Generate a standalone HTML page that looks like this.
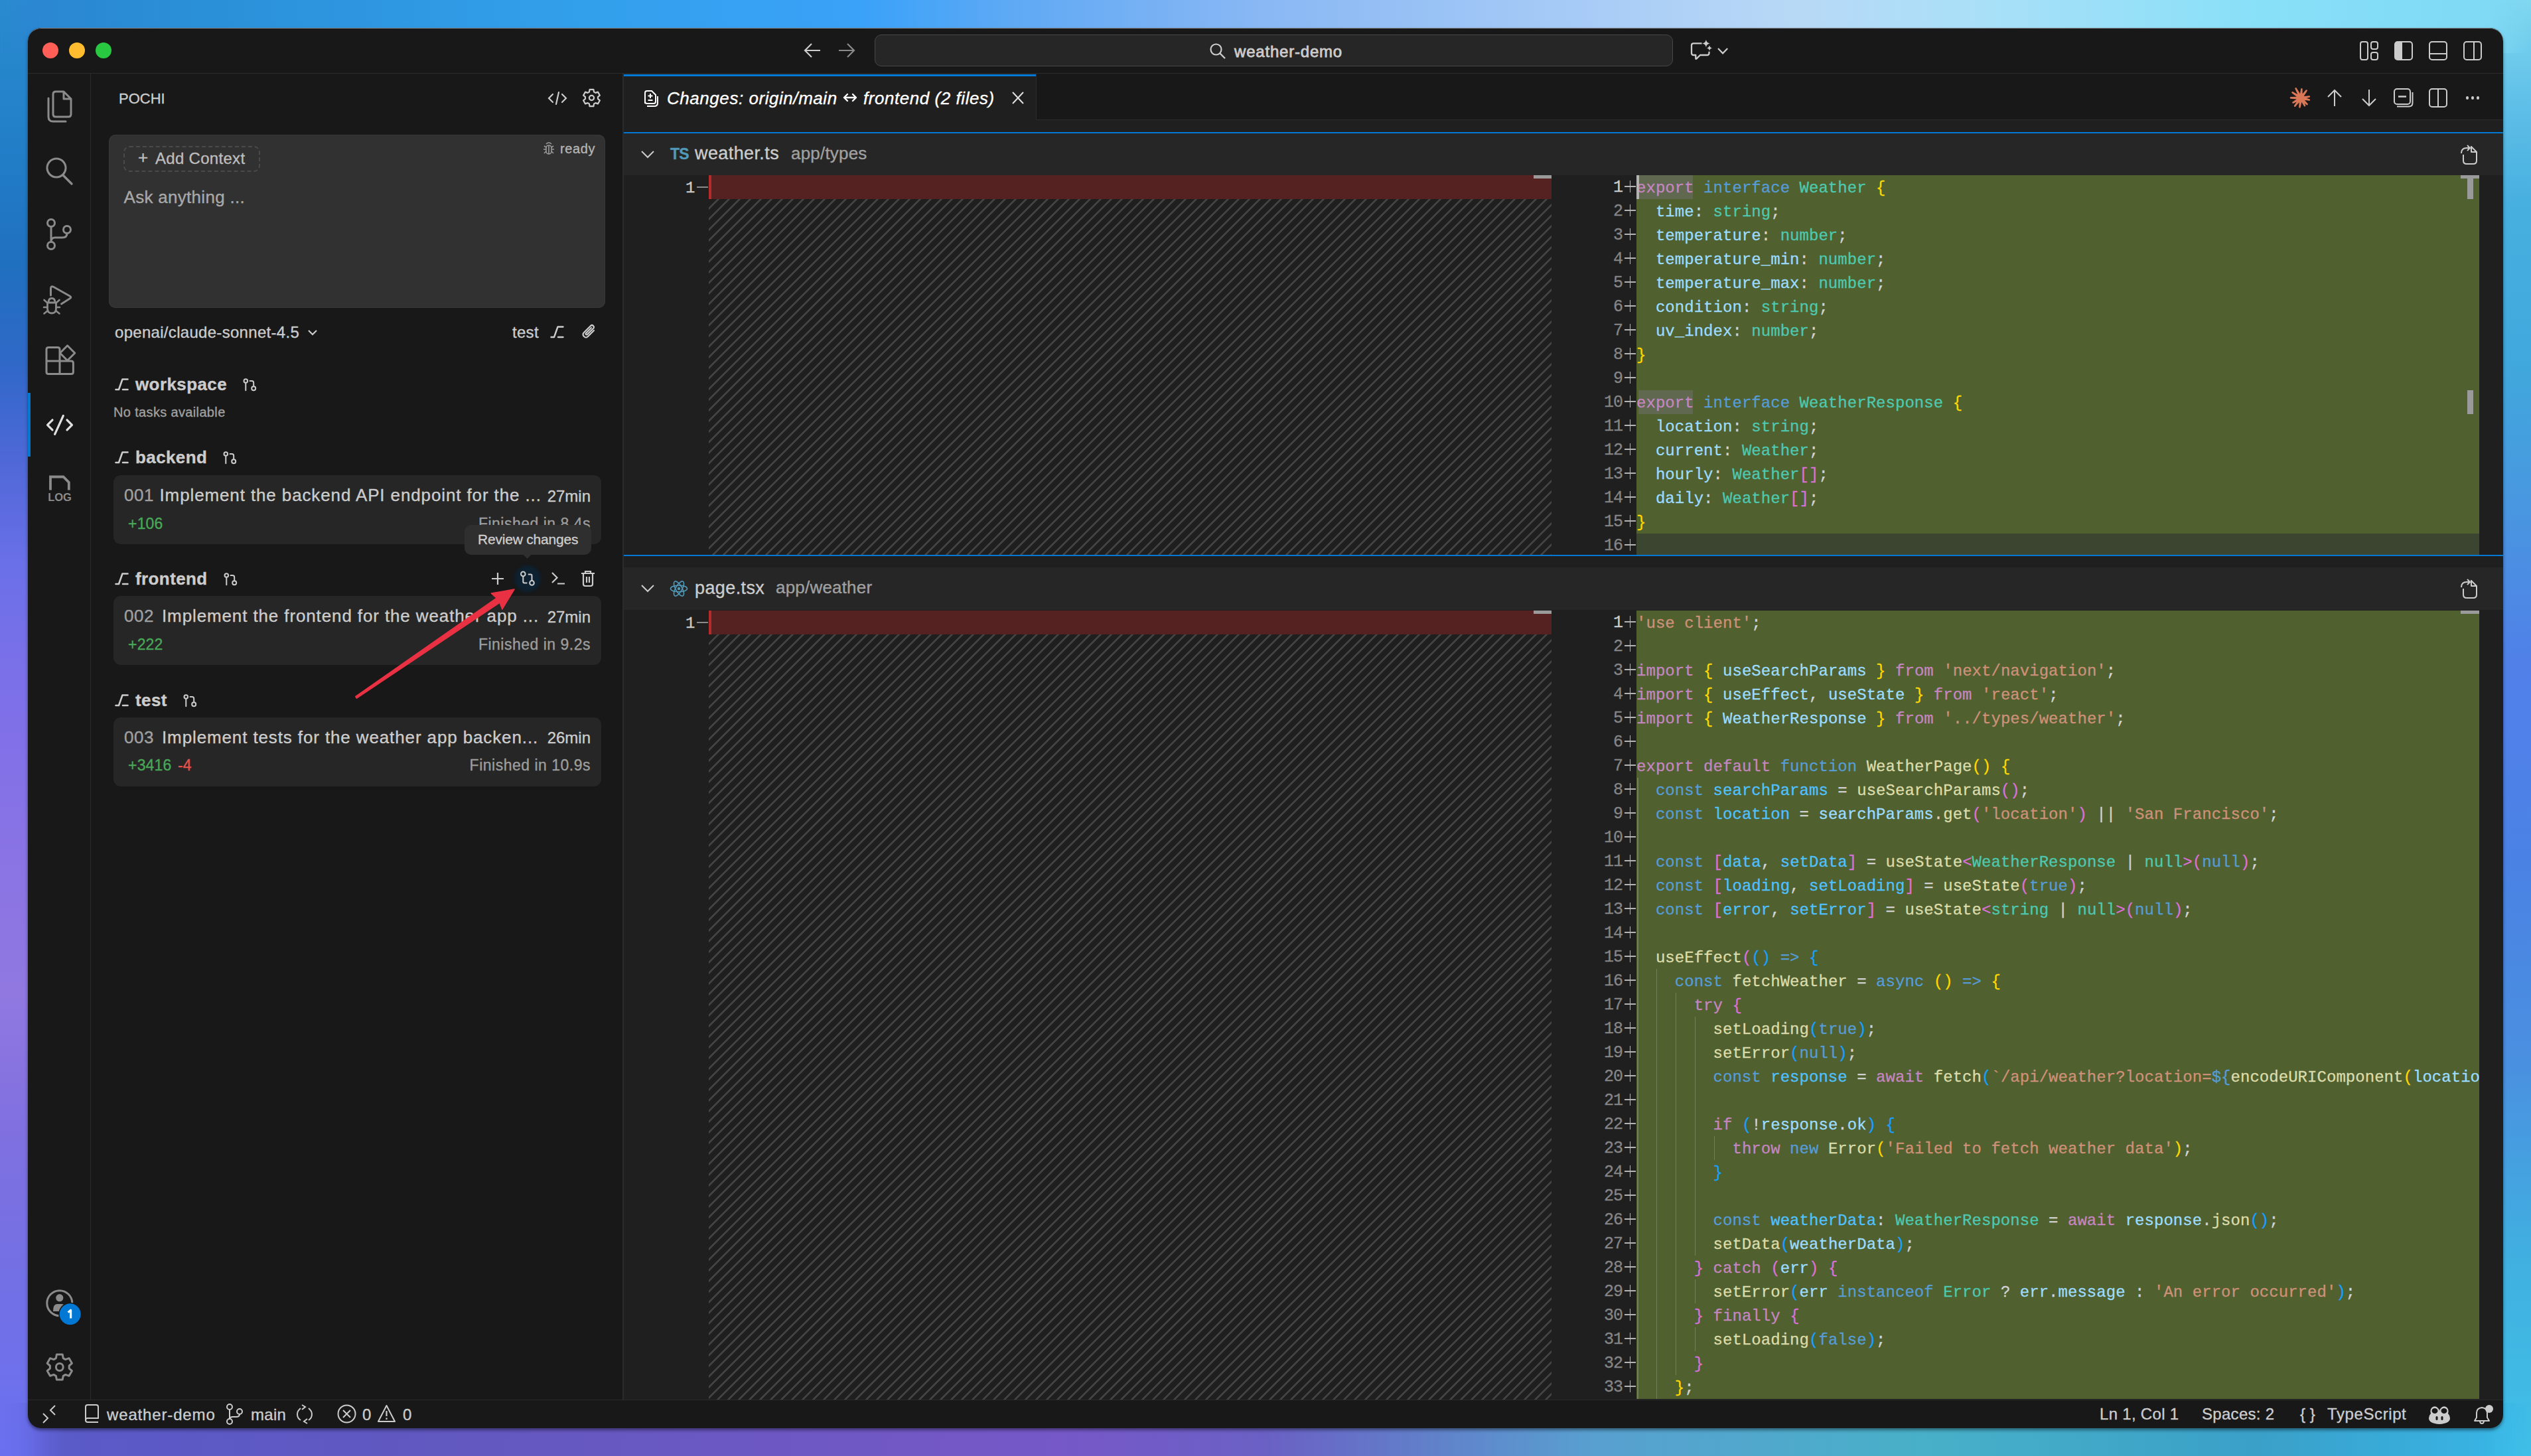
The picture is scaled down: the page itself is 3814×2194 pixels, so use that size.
<!DOCTYPE html><html><head><meta charset="utf-8"><style>
html,body{margin:0;padding:0;width:3814px;height:2194px;overflow:hidden;}
body{position:relative;font-family:"Liberation Sans",sans-serif;}
.t{position:absolute;white-space:pre;-webkit-text-stroke:0.35px currentColor;}
.r{position:absolute;}
.i{position:absolute;overflow:visible;}
#bg{position:absolute;left:0;top:0;width:3814px;height:2194px;}
#win{position:absolute;left:0;top:0;width:3814px;height:2194px;clip-path:inset(42px 42px 42px 42px round 20px);background:#181818;}
.code{position:absolute;font-family:"Liberation Mono",monospace;font-size:24px;line-height:36px;white-space:pre;color:#d4d4d4;letter-spacing:0.04px;-webkit-text-stroke:0.3px currentColor;}
</style></head><body>
<div id="bg" style="background:#5a80e0;"></div>
<div class="r" style="left:0;top:0;width:80px;height:2194px;background:linear-gradient(180deg,#2a8cd0 0px,#2280c8 200px,#2070c0 400px,#3068c8 550px,#5068d8 700px,#6a70e8 850px,#7a70e8 1000px,#8070e8 1100px,#8a74e4 1300px,#9078e0 1500px,#8070e0 1700px,#7470e4 1900px,#6a70f0 2194px);"></div>
<div class="r" style="left:3734px;top:0;width:80px;height:2194px;background:linear-gradient(180deg,#80d8f0 0px,#60c0e8 150px,#48b0e0 300px,#40a8dc 550px,#4898e0 750px,#5080e8 1000px,#5080ea 1100px,#4a82e4 1300px,#4a90e0 1600px,#40b0e0 1900px,#40c0e8 2194px);"></div>
<div class="r" style="left:0;top:0;width:3814px;height:80px;-webkit-mask-image:linear-gradient(90deg,transparent 0px,#000 70px,#000 3744px,transparent 3814px);mask-image:linear-gradient(90deg,transparent 0px,#000 70px,#000 3744px,transparent 3814px);background:linear-gradient(90deg,#2b84d0 0px,#2a90d8 300px,#33a0ec 900px,#3aa2f8 1300px,#62aaf4 1550px,#8ab8f4 1907px,#a8ccf6 2400px,#b8d8f6 2700px,#a8e0f8 3000px,#88e0f8 3400px,#7ed8f4 3814px);"></div>
<div class="r" style="left:0;top:2114px;width:3814px;height:80px;-webkit-mask-image:linear-gradient(90deg,transparent 0px,#000 70px,#000 3744px,transparent 3814px);mask-image:linear-gradient(90deg,transparent 0px,#000 70px,#000 3744px,transparent 3814px);background:linear-gradient(90deg,#6a70f0 0px,#5a5ac8 100px,#6258c0 700px,#7058c4 1300px,#7658c8 1600px,#6a60c4 1907px,#58a0d0 2400px,#48b0c8 2900px,#3aa0c8 3400px,#38b0e0 3700px,#38b8e8 3814px);"></div>
<div class="r" style="left:42px;top:42px;width:3730px;height:2110px;border-radius:20px;box-shadow:0 3px 5px rgba(0,0,0,0.45);"></div>
<div id="win">
<div class="r" style="left:42px;top:42px;width:3730px;height:60px;border-top:1.5px solid rgba(215,225,235,0.55);border-radius:20px 20px 0 0;box-sizing:border-box;"></div>
<div class="r" style="left:42px;top:110px;width:3730px;height:1px;background:#2b2b2b;"></div>
<div class="r" style="left:64px;top:64px;width:24px;height:24px;border-radius:50%;background:#ff5f57;"></div>
<div class="r" style="left:104px;top:64px;width:24px;height:24px;border-radius:50%;background:#febc2e;"></div>
<div class="r" style="left:144px;top:64px;width:24px;height:24px;border-radius:50%;background:#28c840;"></div>
<svg class="i" style="left:1210px;top:64px;width:28px;height:24px;" viewBox="0 0 28 24" xmlns="http://www.w3.org/2000/svg"><path d="M13 2 L3 12 L13 22 M3 12 H26" fill="none" stroke="#cccccc" stroke-width="2.2"/></svg>
<svg class="i" style="left:1262px;top:64px;width:28px;height:24px;" viewBox="0 0 28 24" xmlns="http://www.w3.org/2000/svg"><path d="M15 2 L25 12 L15 22 M25 12 H2" fill="none" stroke="#8a8a8a" stroke-width="2.2"/></svg>
<div class="r" style="left:1318px;top:52px;width:1201px;height:46px;border:1px solid #474747;border-radius:10px;background:#262626;"></div>
<svg class="i" style="left:1822px;top:64px;width:26px;height:26px;" viewBox="0 0 26 26" xmlns="http://www.w3.org/2000/svg"><circle cx="10.5" cy="10.5" r="8" fill="none" stroke="#cccccc" stroke-width="2.2"/><path d="M16.5 16.5 L24 24" stroke="#cccccc" stroke-width="2.4"/></svg>
<div class="t" style="left:1860px;top:62.6px;font-size:24px;line-height:29px;color:#cccccc;font-weight:400;letter-spacing:0.8px;font-style:normal;-webkit-text-stroke:0.8px #cccccc;">weather-demo</div>
<svg class="i" style="left:2540px;top:55px;width:70px;height:40px;" viewBox="2540 55 70 40" xmlns="http://www.w3.org/2000/svg"><path d="M2564.5 65.3 H2552 Q2549 65.3 2549 68.3 V80 Q2549 83 2552 83 H2555.3 V88 Q2555.3 89.6 2556.6 88.4 L2562 83 H2572.5 Q2575.5 83 2575.5 80 V77.8" fill="none" stroke="#cccccc" stroke-width="2.3" stroke-linejoin="round"/><path d="M2570.9 59.8 Q2571.7 64.7 2576.6 65.5 Q2571.7 66.3 2570.9 71.2 Q2570.1 66.3 2565.2 65.5 Q2570.1 64.7 2570.9 59.8 Z M2576 68.3 Q2576.6 71.9 2580.2 72.5 Q2576.6 73.1 2576 76.7 Q2575.4 73.1 2571.8 72.5 Q2575.4 71.9 2576 68.3 Z" fill="#cccccc"/><path d="M2589 73 L2596.1 80.3 L2603.2 73" fill="none" stroke="#cccccc" stroke-width="2.2"/></svg>
<svg class="i" style="left:3556px;top:62px;width:28px;height:29px;" viewBox="0 0 28 29" xmlns="http://www.w3.org/2000/svg"><rect x="1" y="1" width="11" height="27" rx="3" fill="none" stroke="#cccccc" stroke-width="2"/><rect x="17" y="1" width="10" height="11" rx="3" fill="none" stroke="#cccccc" stroke-width="2"/><rect x="17" y="17" width="10" height="11" rx="3" fill="none" stroke="#cccccc" stroke-width="2"/></svg>
<svg class="i" style="left:3608px;top:62px;width:28px;height:29px;" viewBox="0 0 28 29" xmlns="http://www.w3.org/2000/svg"><path d="M4 1 H12 V28 H4 Q1 28 1 25 V4 Q1 1 4 1 Z" fill="#cccccc"/><rect x="1" y="1" width="26" height="27" rx="4" fill="none" stroke="#cccccc" stroke-width="2"/></svg>
<svg class="i" style="left:3660px;top:62px;width:28px;height:29px;" viewBox="0 0 28 29" xmlns="http://www.w3.org/2000/svg"><rect x="1" y="1" width="26" height="27" rx="4" fill="none" stroke="#cccccc" stroke-width="2"/><path d="M1 19 H27" stroke="#cccccc" stroke-width="2"/></svg>
<svg class="i" style="left:3712px;top:62px;width:28px;height:29px;" viewBox="0 0 28 29" xmlns="http://www.w3.org/2000/svg"><rect x="1" y="1" width="26" height="27" rx="4" fill="none" stroke="#cccccc" stroke-width="2"/><path d="M16 1 V28" stroke="#cccccc" stroke-width="2"/></svg>
<div class="r" style="left:136px;top:111px;width:1px;height:1998px;background:#2b2b2b;"></div>
<svg class="i" style="left:68px;top:136px;width:42px;height:50px;" viewBox="0 0 42 50" xmlns="http://www.w3.org/2000/svg"><path d="M12 6 Q12 2 16 2 H28 L39 13 V36 Q39 40 35 40 H16 Q12 40 12 36 Z M28 2 V13 H39" fill="none" stroke="#8b8b8b" stroke-width="3" stroke-linejoin="round"/><path d="M5 12 V40 Q5 47 12 47 H31" fill="none" stroke="#8b8b8b" stroke-width="3" stroke-linecap="round"/></svg>
<svg class="i" style="left:68px;top:236px;width:42px;height:44px;" viewBox="0 0 42 44" xmlns="http://www.w3.org/2000/svg"><circle cx="17" cy="17" r="14" fill="none" stroke="#8b8b8b" stroke-width="3"/><path d="M27 28 L40 41" stroke="#8b8b8b" stroke-width="3.4" stroke-linecap="round"/></svg>
<svg class="i" style="left:68px;top:329px;width:42px;height:48px;" viewBox="0 0 42 48" xmlns="http://www.w3.org/2000/svg"><circle cx="9" cy="7" r="5.5" fill="none" stroke="#8b8b8b" stroke-width="3"/><circle cx="9" cy="41" r="5.5" fill="none" stroke="#8b8b8b" stroke-width="3"/><circle cx="33" cy="17" r="5.5" fill="none" stroke="#8b8b8b" stroke-width="3"/><path d="M9 12.5 V35.5 M33 22.5 Q33 29 26 29 H15 Q9 29 9 35" fill="none" stroke="#8b8b8b" stroke-width="3"/></svg>
<svg class="i" style="left:42px;top:420px;width:95px;height:60px;" viewBox="42 420 95 60" xmlns="http://www.w3.org/2000/svg"><path d="M76.5 445 V435 Q76.5 430 81 432.5 L105 446 Q108.5 448 105 450 L92.5 458" fill="none" stroke="#8b8b8b" stroke-width="3" stroke-linejoin="round" stroke-linecap="round"/><path d="M73 456 Q73 449.5 78 449.5 Q83 449.5 83 456" fill="none" stroke="#8b8b8b" stroke-width="2.8"/><path d="M71.5 456 H84.5 V465 Q84.5 472 78 472 Q71.5 472 71.5 465 Z" fill="none" stroke="#8b8b8b" stroke-width="2.8" stroke-linejoin="round"/><path d="M66.5 452 L71.5 456.5 M66 463 H71.5 M66.5 472.5 L71.5 468.5 M89.5 452 L84.5 456.5 M90 463 H84.5 M89.5 472.5 L84.5 468.5" fill="none" stroke="#8b8b8b" stroke-width="2.6" stroke-linecap="round"/></svg>
<svg class="i" style="left:42px;top:510px;width:95px;height:60px;" viewBox="42 510 95 60" xmlns="http://www.w3.org/2000/svg"><path d="M73 523.5 H87 Q90 523.5 90 526.5 V563.5 H73 Q70 563.5 70 560.5 V526.5 Q70 523.5 73 523.5 Z M70 544 H107.4 Q110.4 544 110.4 547 V560.5 Q110.4 563.5 107.4 563.5 H90" fill="none" stroke="#8b8b8b" stroke-width="3" stroke-linejoin="round"/><path d="M101.6 520.8 L112.8 532 L101.6 543.2 L90.4 532 Z" fill="none" stroke="#8b8b8b" stroke-width="3" stroke-linejoin="round"/></svg>
<div class="r" style="left:42px;top:592px;width:4px;height:96px;background:#0078d4;"></div>
<svg class="i" style="left:42px;top:600px;width:95px;height:70px;" viewBox="42 600 95 70" xmlns="http://www.w3.org/2000/svg"><path d="M79 632.8 L71.5 640.3 L79 647.8 M101 632.8 L108.5 640.3 L101 647.8 M95.3 626.5 L82.6 654.3" fill="none" stroke="#e0e0e0" stroke-width="3.2" stroke-linecap="round" stroke-linejoin="round"/></svg>
<svg class="i" style="left:42px;top:700px;width:95px;height:70px;" viewBox="42 700 95 70" xmlns="http://www.w3.org/2000/svg"><path d="M76 738.5 V718.5 H95.5 L103.8 726.8 V738.5" fill="none" stroke="#8b8b8b" stroke-width="3.8"/><text x="90" y="754.6" text-anchor="middle" font-family="Liberation Sans" font-weight="700" font-size="16.5" fill="#8b8b8b">LOG</text></svg>
<svg class="i" style="left:42px;top:1930px;width:95px;height:70px;" viewBox="42 1930 95 70" xmlns="http://www.w3.org/2000/svg"><circle cx="89.8" cy="1963.7" r="19" fill="none" stroke="#8b8b8b" stroke-width="3"/><circle cx="89.8" cy="1955.7" r="5.6" fill="#8b8b8b"/><path d="M80 1976 Q80 1965 86 1965 H93.6 Q99.6 1965 99.6 1976 Z" fill="#8b8b8b"/><circle cx="105.7" cy="1980.2" r="17.5" fill="#181818"/><circle cx="105.7" cy="1980.2" r="16" fill="#0078d4"/></svg>
<svg class="i" style="left:42px;top:1930px;width:95px;height:70px;" viewBox="42 1930 95 70" xmlns="http://www.w3.org/2000/svg"><path d="M102.6 1977.6 L106.6 1974.2 V1986.6" fill="none" stroke="#ffffff" stroke-width="3.2" stroke-linejoin="round"/></svg>
<svg class="i" style="left:42px;top:2030px;width:95px;height:60px;" viewBox="42 2030 95 60" xmlns="http://www.w3.org/2000/svg"><path d="M84.4 2046.6 L85.4 2041.0 L94.2 2041.0 L95.2 2046.6 L98.7 2048.6 L104.1 2046.7 L108.4 2054.3 L104.2 2058.0 L104.2 2062.0 L108.4 2065.7 L104.1 2073.3 L98.7 2071.4 L95.2 2073.4 L94.2 2079.0 L85.4 2079.0 L84.4 2073.4 L80.9 2071.4 L75.5 2073.3 L71.2 2065.7 L75.4 2062.0 L75.4 2058.0 L71.2 2054.3 L75.5 2046.7 L80.9 2048.6 Z" fill="none" stroke="#8b8b8b" stroke-width="3" stroke-linejoin="round"/><circle cx="89.8" cy="2060" r="5.4" fill="none" stroke="#8b8b8b" stroke-width="3"/></svg>
<div class="r" style="left:938px;top:111px;width:1.5px;height:1998px;background:#2b2b2b;"></div>
<div class="t" style="left:179px;top:135.8px;font-size:22px;line-height:26px;color:#cccccc;font-weight:400;letter-spacing:0px;font-style:normal;">POCHI</div>
<svg class="i" style="left:826px;top:138px;width:28px;height:20px;" viewBox="0 0 28 20" xmlns="http://www.w3.org/2000/svg"><path d="M7 4 L1 10 L7 16 M21 4 L27 10 L21 16 M16 1 L12 19" fill="none" stroke="#cccccc" stroke-width="2.2" stroke-linecap="round"/></svg>
<svg class="i" style="left:870px;top:126px;width:44px;height:44px;" viewBox="870 126 44 44" xmlns="http://www.w3.org/2000/svg"><path d="M887.9 138.6 L888.6 134.8 L894.4 134.8 L895.1 138.6 L897.4 139.9 L901.0 138.6 L903.9 143.7 L901.0 146.2 L901.0 148.8 L903.9 151.3 L901.0 156.4 L897.4 155.1 L895.1 156.4 L894.4 160.2 L888.6 160.2 L887.9 156.4 L885.6 155.1 L882.0 156.4 L879.1 151.3 L882.0 148.8 L882.0 146.2 L879.1 143.7 L882.0 138.6 L885.6 139.9 Z" fill="none" stroke="#cccccc" stroke-width="2.2" stroke-linejoin="round"/><circle cx="891.5" cy="147.5" r="3.6" fill="none" stroke="#cccccc" stroke-width="2.2"/></svg>
<div class="r" style="left:164px;top:203px;width:748px;height:261px;border-radius:10px;background:#313131;box-shadow:inset 0 0 0 1px #383838;"></div>
<div class="r" style="left:186px;top:220px;width:202px;height:35px;border-radius:9px;border:2px dashed #4a4a4a;"></div>
<div class="t" style="left:208px;top:221.9px;font-size:26px;line-height:31px;color:#bdbdbd;font-weight:400;letter-spacing:0px;font-style:normal;">+</div>
<div class="t" style="left:234px;top:223.6px;font-size:24px;line-height:29px;color:#bdbdbd;font-weight:400;letter-spacing:0.3px;font-style:normal;">Add Context</div>
<svg class="i" style="left:817px;top:213px;width:20px;height:20px;" viewBox="0 0 20 20" xmlns="http://www.w3.org/2000/svg"><path d="M6 4 Q10 0 14 4 M3 7 L6 9 M17 7 L14 9 M2 12 H6 M18 12 H14 M3 18 L6 15 M17 18 L14 15 M10 7 V19" fill="none" stroke="#9a9a9a" stroke-width="1.6"/><rect x="6" y="6" width="8" height="13" rx="4" fill="none" stroke="#9a9a9a" stroke-width="1.6"/></svg>
<div class="t" style="left:844px;top:212.0px;font-size:20px;line-height:24px;color:#b4b4b4;font-weight:400;letter-spacing:0.6px;font-style:normal;">ready</div>
<div class="t" style="left:186.5px;top:282.0px;font-size:26px;line-height:31px;color:#a8a8a8;font-weight:400;letter-spacing:0.3px;font-style:normal;">Ask anything ...</div>
<div class="t" style="left:173px;top:486.1px;font-size:24px;line-height:29px;color:#cccccc;font-weight:400;letter-spacing:0.3px;font-style:normal;">openai/claude-sonnet-4.5</div>
<svg class="i" style="left:463px;top:496px;width:16px;height:12px;" viewBox="0 0 16 12" xmlns="http://www.w3.org/2000/svg"><path d="M2 2 L8 8 L14 2" fill="none" stroke="#cccccc" stroke-width="2.2"/></svg>
<div class="t" style="left:772px;top:486.1px;font-size:24px;line-height:29px;color:#cccccc;font-weight:400;letter-spacing:0.3px;font-style:normal;">test</div>
<svg class="i" style="left:829px;top:490px;width:22px;height:22px;" viewBox="0 0 22 22" xmlns="http://www.w3.org/2000/svg"><path d="M1.5 18 H6 L11.5 2.5 H19.5 M12 18 H19.5" fill="none" stroke="#cccccc" stroke-width="2.4" stroke-linecap="round" stroke-linejoin="round"/></svg>
<svg class="i" style="left:875px;top:488px;width:26px;height:26px;" viewBox="0 0 26 26" xmlns="http://www.w3.org/2000/svg"><path d="M20 10 L11 19 Q8 22 5 19 Q2 16 5 13 L15 3 Q17 1 19 3 Q21 5 19 7 L10 16 Q9 17 8 16 Q7 15 8 14 L16 6" fill="none" stroke="#cccccc" stroke-width="2.2" stroke-linecap="round"/></svg>
<svg class="i" style="left:173px;top:569px;width:22px;height:22px;" viewBox="0 0 22 22" xmlns="http://www.w3.org/2000/svg"><path d="M1.5 18 H6 L11.5 2.5 H19.5 M12 18 H19.5" fill="none" stroke="#cccccc" stroke-width="2.6" stroke-linecap="round" stroke-linejoin="round"/></svg>
<div class="t" style="left:204px;top:564.4px;font-size:26px;line-height:31px;color:#cccccc;font-weight:700;letter-spacing:0.4px;font-style:normal;">workspace</div>
<svg class="i" style="left:365.5px;top:568.5px;width:22px;height:22px;" viewBox="0 0 22 22" xmlns="http://www.w3.org/2000/svg"><circle cx="4.3" cy="5" r="2.8" fill="none" stroke="#cccccc" stroke-width="2"/><circle cx="16.2" cy="16.3" r="3" fill="none" stroke="#cccccc" stroke-width="2"/><path d="M4.3 7.8 V19.2 M10.5 5 H13.5 Q16.2 5 16.2 7.7 V13.3" fill="none" stroke="#cccccc" stroke-width="2" stroke-linecap="round"/></svg>
<div class="t" style="left:171px;top:608.5px;font-size:20px;line-height:24px;color:#a0a0a0;font-weight:400;letter-spacing:0.35px;font-style:normal;">No tasks available</div>
<svg class="i" style="left:173px;top:679px;width:22px;height:22px;" viewBox="0 0 22 22" xmlns="http://www.w3.org/2000/svg"><path d="M1.5 18 H6 L11.5 2.5 H19.5 M12 18 H19.5" fill="none" stroke="#cccccc" stroke-width="2.6" stroke-linecap="round" stroke-linejoin="round"/></svg>
<div class="t" style="left:204px;top:674.4px;font-size:26px;line-height:31px;color:#cccccc;font-weight:700;letter-spacing:0.4px;font-style:normal;">backend</div>
<svg class="i" style="left:335.5px;top:678.5px;width:22px;height:22px;" viewBox="0 0 22 22" xmlns="http://www.w3.org/2000/svg"><circle cx="4.3" cy="5" r="2.8" fill="none" stroke="#cccccc" stroke-width="2"/><circle cx="16.2" cy="16.3" r="3" fill="none" stroke="#cccccc" stroke-width="2"/><path d="M4.3 7.8 V19.2 M10.5 5 H13.5 Q16.2 5 16.2 7.7 V13.3" fill="none" stroke="#cccccc" stroke-width="2" stroke-linecap="round"/></svg>
<div class="r" style="left:171px;top:716px;width:735px;height:104px;border-radius:11px;background:#262626;"></div>
<div class="t" style="left:187px;top:731.2px;font-size:26px;line-height:31px;color:#a0a0a0;font-weight:400;letter-spacing:0.6px;font-style:normal;">001</div>
<div class="t" style="left:240.5px;top:731.2px;font-size:26px;line-height:31px;color:#cccccc;font-weight:400;letter-spacing:0.88px;font-style:normal;">Implement the backend API endpoint for the ...</div>
<div class="t" style="right:2924px;top:732.9px;font-size:24px;line-height:29px;color:#cccccc;font-weight:400;letter-spacing:0px;font-style:normal;">27min</div>
<div class="t" style="left:193px;top:774.5px;font-size:23px;line-height:28px;color:#48a858;font-weight:400;letter-spacing:0.2px;font-style:normal;">+106</div>
<div class="t" style="right:2924px;top:774.5px;font-size:23px;line-height:28px;color:#9d9d9d;font-weight:400;letter-spacing:0.5px;font-style:normal;">Finished in 8.4s</div>
<div class="r" style="left:700px;top:791px;width:191px;height:45px;border-radius:10px;background:#2f2f2f;"></div>
<div class="r" style="left:790px;top:831px;width:9px;height:9px;background:#2f2f2f;transform:rotate(45deg);"></div>
<div class="t" style="left:720px;top:799.9px;font-size:21px;line-height:25px;color:#cccccc;font-weight:400;letter-spacing:-0.2px;font-style:normal;">Review changes</div>
<svg class="i" style="left:173px;top:862px;width:22px;height:22px;" viewBox="0 0 22 22" xmlns="http://www.w3.org/2000/svg"><path d="M1.5 18 H6 L11.5 2.5 H19.5 M12 18 H19.5" fill="none" stroke="#cccccc" stroke-width="2.6" stroke-linecap="round" stroke-linejoin="round"/></svg>
<div class="t" style="left:204px;top:857.4px;font-size:26px;line-height:31px;color:#cccccc;font-weight:700;letter-spacing:0.4px;font-style:normal;">frontend</div>
<svg class="i" style="left:337px;top:861.5px;width:22px;height:22px;" viewBox="0 0 22 22" xmlns="http://www.w3.org/2000/svg"><circle cx="4.3" cy="5" r="2.8" fill="none" stroke="#cccccc" stroke-width="2"/><circle cx="16.2" cy="16.3" r="3" fill="none" stroke="#cccccc" stroke-width="2"/><path d="M4.3 7.8 V19.2 M10.5 5 H13.5 Q16.2 5 16.2 7.7 V13.3" fill="none" stroke="#cccccc" stroke-width="2" stroke-linecap="round"/></svg>
<svg class="i" style="left:740px;top:862px;width:20px;height:20px;" viewBox="0 0 20 20" xmlns="http://www.w3.org/2000/svg"><path d="M10 1 V19 M1 10 H19" stroke="#cccccc" stroke-width="2.2"/></svg>
<div class="r" style="left:778px;top:855px;width:34px;height:34px;border-radius:50%;background:#0e2130;box-shadow:0 0 4px 3px #0e2130;"></div>
<svg class="i" style="left:783px;top:860px;width:24px;height:24px;" viewBox="0 0 24 24" xmlns="http://www.w3.org/2000/svg"><circle cx="5.3" cy="4.9" r="3.3" fill="none" stroke="#cccccc" stroke-width="2"/><circle cx="18.5" cy="18.4" r="3.3" fill="none" stroke="#cccccc" stroke-width="2"/><path d="M5.3 8.2 V16.5 Q5.3 18.4 7.2 18.4 H11.4 M12.8 5.6 H16.5 Q18.5 5.6 18.5 7.6 V15.1" fill="none" stroke="#cccccc" stroke-width="2"/></svg>
<svg class="i" style="left:830px;top:861px;width:22px;height:20px;" viewBox="0 0 22 20" xmlns="http://www.w3.org/2000/svg"><path d="M2 2 L9.5 9.5 L2 17 M10 18.5 H21" fill="none" stroke="#cccccc" stroke-width="2.2"/></svg>
<svg class="i" style="left:875px;top:859px;width:22px;height:25px;" viewBox="0 0 22 25" xmlns="http://www.w3.org/2000/svg"><path d="M1 5 H21 M7 5 V2 H15 V5 M4 5 V21 Q4 24 7 24 H15 Q18 24 18 21 V5 M9 10 V19 M13 10 V19" fill="none" stroke="#cccccc" stroke-width="2.2"/></svg>
<div class="r" style="left:171px;top:898px;width:735px;height:104px;border-radius:11px;background:#262626;"></div>
<div class="t" style="left:187px;top:913.2px;font-size:26px;line-height:31px;color:#a0a0a0;font-weight:400;letter-spacing:0.6px;font-style:normal;">002</div>
<div class="t" style="left:244px;top:913.2px;font-size:26px;line-height:31px;color:#cccccc;font-weight:400;letter-spacing:0.88px;font-style:normal;">Implement the frontend for the weather app ...</div>
<div class="t" style="right:2924px;top:914.9px;font-size:24px;line-height:29px;color:#cccccc;font-weight:400;letter-spacing:0px;font-style:normal;">27min</div>
<div class="t" style="left:193px;top:956.5px;font-size:23px;line-height:28px;color:#48a858;font-weight:400;letter-spacing:0.2px;font-style:normal;">+222</div>
<div class="t" style="right:2924px;top:956.5px;font-size:23px;line-height:28px;color:#9d9d9d;font-weight:400;letter-spacing:0.5px;font-style:normal;">Finished in 9.2s</div>
<svg class="i" style="left:173px;top:1045px;width:22px;height:22px;" viewBox="0 0 22 22" xmlns="http://www.w3.org/2000/svg"><path d="M1.5 18 H6 L11.5 2.5 H19.5 M12 18 H19.5" fill="none" stroke="#cccccc" stroke-width="2.6" stroke-linecap="round" stroke-linejoin="round"/></svg>
<div class="t" style="left:204px;top:1040.4px;font-size:26px;line-height:31px;color:#cccccc;font-weight:700;letter-spacing:0.4px;font-style:normal;">test</div>
<svg class="i" style="left:276.2px;top:1044.5px;width:22px;height:22px;" viewBox="0 0 22 22" xmlns="http://www.w3.org/2000/svg"><circle cx="4.3" cy="5" r="2.8" fill="none" stroke="#cccccc" stroke-width="2"/><circle cx="16.2" cy="16.3" r="3" fill="none" stroke="#cccccc" stroke-width="2"/><path d="M4.3 7.8 V19.2 M10.5 5 H13.5 Q16.2 5 16.2 7.7 V13.3" fill="none" stroke="#cccccc" stroke-width="2" stroke-linecap="round"/></svg>
<div class="r" style="left:171px;top:1080.5px;width:735px;height:104px;border-radius:11px;background:#262626;"></div>
<div class="t" style="left:187px;top:1095.7px;font-size:26px;line-height:31px;color:#a0a0a0;font-weight:400;letter-spacing:0.6px;font-style:normal;">003</div>
<div class="t" style="left:244px;top:1095.7px;font-size:26px;line-height:31px;color:#cccccc;font-weight:400;letter-spacing:0.88px;font-style:normal;">Implement tests for the weather app backen...</div>
<div class="t" style="right:2924px;top:1097.4px;font-size:24px;line-height:29px;color:#cccccc;font-weight:400;letter-spacing:0px;font-style:normal;">26min</div>
<div class="t" style="left:193px;top:1139.0px;font-size:23px;line-height:28px;color:#48a858;font-weight:400;letter-spacing:0.2px;font-style:normal;">+3416</div>
<div class="t" style="left:268px;top:1139.0px;font-size:23px;line-height:28px;color:#e5534b;font-weight:400;letter-spacing:0.2px;font-style:normal;">-4</div>
<div class="t" style="right:2924px;top:1139.0px;font-size:23px;line-height:28px;color:#9d9d9d;font-weight:400;letter-spacing:0.5px;font-style:normal;">Finished in 10.9s</div>
<div class="r" style="left:940px;top:111px;width:2832px;height:70px;background:#181818;"></div>
<div class="r" style="left:940px;top:180px;width:2832px;height:1px;background:#2b2b2b;"></div>
<div class="r" style="left:940px;top:111px;width:622px;height:70px;background:#1f1f1f;"></div>
<div class="r" style="left:940px;top:112px;width:622px;height:2.5px;background:#0078d4;"></div>
<div class="r" style="left:1561px;top:111px;width:1px;height:70px;background:#2b2b2b;"></div>
<svg class="i" style="left:968px;top:136px;width:24px;height:26px;" viewBox="0 0 24 26" xmlns="http://www.w3.org/2000/svg"><path d="M4 20 V4 Q4 1 7 1 H14 L20 7 V17 Q20 20 17 20 H7 Q4 20 4 17" fill="none" stroke="#ffffff" stroke-width="2"/><path d="M12 5 V12 M8.5 8.5 H15.5 M8.5 15 H15.5" stroke="#ffffff" stroke-width="2"/><path d="M7 24 H18 Q23 24 23 19 V9" fill="none" stroke="#ffffff" stroke-width="2"/></svg>
<div class="t" style="left:1005px;top:132.8px;font-size:26px;line-height:31px;color:#ffffff;font-weight:400;letter-spacing:0.55px;font-style:italic;">Changes: origin/main</div>
<svg class="i" style="left:1270px;top:138px;width:22px;height:18px;" viewBox="0 0 22 18" xmlns="http://www.w3.org/2000/svg"><path d="M2 9 H20 M7 4 L2 9 L7 14 M15 4 L20 9 L15 14" fill="none" stroke="#ffffff" stroke-width="2.4" stroke-linecap="round" stroke-linejoin="round"/></svg>
<div class="t" style="left:1301px;top:132.8px;font-size:26px;line-height:31px;color:#ffffff;font-weight:400;letter-spacing:0.55px;font-style:italic;">frontend (2 files)</div>
<svg class="i" style="left:1525px;top:138px;width:18px;height:19px;" viewBox="0 0 18 19" xmlns="http://www.w3.org/2000/svg"><path d="M1 1 L17 18 M17 1 L1 18" stroke="#e0e0e0" stroke-width="2"/></svg>
<svg class="i" style="left:3440px;top:122px;width:55px;height:55px;" viewBox="3440 122 55 55" xmlns="http://www.w3.org/2000/svg"><path d="M3469.32 146.61 L3460.76 132.83 L3458.47 134.06 L3465.28 148.79 Z M3460.92 133.44 A1.3 1.3 0 1 0 3458.32 133.44 A1.3 1.3 0 1 0 3460.92 133.44 Z M3469.59 147.89 L3469.69 134.50 L3467.10 134.29 L3465.01 147.51 Z M3469.69 134.40 A1.3 1.3 0 1 0 3467.09 134.40 A1.3 1.3 0 1 0 3469.69 134.40 Z M3469.14 149.08 L3476.66 137.32 L3474.58 135.76 L3465.46 146.32 Z M3476.92 136.54 A1.3 1.3 0 1 0 3474.32 136.54 A1.3 1.3 0 1 0 3476.92 136.54 Z M3467.69 149.97 L3480.04 146.80 L3479.60 144.24 L3466.91 145.43 Z M3481.12 145.52 A1.3 1.3 0 1 0 3478.52 145.52 A1.3 1.3 0 1 0 3481.12 145.52 Z M3466.78 149.94 L3479.54 151.87 L3480.13 149.34 L3467.82 145.46 Z M3481.13 150.61 A1.3 1.3 0 1 0 3478.53 150.61 A1.3 1.3 0 1 0 3481.13 150.61 Z M3465.67 149.32 L3475.66 157.99 L3477.51 156.16 L3468.93 146.08 Z M3477.89 157.08 A1.3 1.3 0 1 0 3475.29 157.08 A1.3 1.3 0 1 0 3477.89 157.08 Z M3465.24 148.73 L3471.86 159.72 L3474.18 158.56 L3469.36 146.67 Z M3474.32 159.14 A1.3 1.3 0 1 0 3471.72 159.14 A1.3 1.3 0 1 0 3474.32 159.14 Z M3465.02 147.40 L3464.18 161.24 L3466.76 161.58 L3469.58 148.00 Z M3466.77 161.41 A1.3 1.3 0 1 0 3464.17 161.41 A1.3 1.3 0 1 0 3466.77 161.41 Z M3465.47 146.31 L3457.15 158.88 L3459.22 160.45 L3469.13 149.09 Z M3459.49 159.67 A1.3 1.3 0 1 0 3456.89 159.67 A1.3 1.3 0 1 0 3459.49 159.67 Z M3466.15 145.71 L3454.78 153.42 L3456.08 155.68 L3468.45 149.69 Z M3456.73 154.55 A1.3 1.3 0 1 0 3454.13 154.55 A1.3 1.3 0 1 0 3456.73 154.55 Z M3467.36 145.40 L3452.03 146.03 L3451.97 148.63 L3467.24 150.00 Z M3453.30 147.33 A1.3 1.3 0 1 0 3450.70 147.33 A1.3 1.3 0 1 0 3453.30 147.33 Z M3468.57 145.78 L3455.30 138.23 L3453.87 140.40 L3466.03 149.62 Z M3455.89 139.32 A1.3 1.3 0 1 0 3453.29 139.32 A1.3 1.3 0 1 0 3455.89 139.32 Z" fill="#d97757"/><circle cx="3467.3" cy="147.7" r="4.8" fill="#d97757"/></svg>
<svg class="i" style="left:3507px;top:134px;width:22px;height:27px;" viewBox="0 0 22 27" xmlns="http://www.w3.org/2000/svg"><path d="M11 26 V2 M1 12 L11 2 L21 12" fill="none" stroke="#cccccc" stroke-width="2"/></svg>
<svg class="i" style="left:3559px;top:134px;width:22px;height:27px;" viewBox="0 0 22 27" xmlns="http://www.w3.org/2000/svg"><path d="M11 1 V25 M1 15 L11 25 L21 15" fill="none" stroke="#cccccc" stroke-width="2"/></svg>
<svg class="i" style="left:3607px;top:133px;width:30px;height:29px;" viewBox="0 0 30 29" xmlns="http://www.w3.org/2000/svg"><rect x="1" y="1" width="24" height="23" rx="4" fill="none" stroke="#cccccc" stroke-width="2"/><path d="M7 12.5 H19" stroke="#cccccc" stroke-width="2.4"/><path d="M5 27.5 H23 Q28.5 27.5 28.5 22 V6" fill="none" stroke="#cccccc" stroke-width="2"/></svg>
<svg class="i" style="left:3660px;top:133px;width:28px;height:29px;" viewBox="0 0 28 29" xmlns="http://www.w3.org/2000/svg"><rect x="1" y="1" width="26" height="27" rx="4" fill="none" stroke="#cccccc" stroke-width="2"/><path d="M14 1 V28" stroke="#cccccc" stroke-width="2"/></svg>
<div class="r" style="left:3715.8px;top:145.3px;width:4.4px;height:4.4px;border-radius:50%;background:#cccccc;"></div>
<div class="r" style="left:3723.8px;top:145.3px;width:4.4px;height:4.4px;border-radius:50%;background:#cccccc;"></div>
<div class="r" style="left:3731.8px;top:145.3px;width:4.4px;height:4.4px;border-radius:50%;background:#cccccc;"></div>
<div class="r" style="left:940px;top:181px;width:2832px;height:1928px;background:#1f1f1f;"></div>
<div class="r" style="left:940px;top:199px;width:2832px;height:2px;background:#0078d4;"></div>
<div class="r" style="left:940px;top:201px;width:2832px;height:63px;background:#262626;"></div>
<svg class="i" style="left:966px;top:226.5px;width:20px;height:12px;" viewBox="0 0 20 12" xmlns="http://www.w3.org/2000/svg"><path d="M1 1 L10 10 L19 1" fill="none" stroke="#cccccc" stroke-width="2"/></svg>
<div class="t" style="left:1010px;top:218.4px;font-size:23px;line-height:28px;color:#519aba;font-weight:700;letter-spacing:-0.8px;font-style:normal;">TS</div>
<div class="t" style="left:1047px;top:215.1px;font-size:27px;line-height:32px;color:#cccccc;font-weight:400;letter-spacing:0.4px;font-style:normal;">weather.ts</div>
<div class="t" style="left:1192px;top:215.9px;font-size:26px;line-height:31px;color:#a0a0a0;font-weight:400;letter-spacing:0.2px;font-style:normal;">app/types</div>
<svg class="i" style="left:3707px;top:216.5px;width:28px;height:32px;" viewBox="0 0 28 32" xmlns="http://www.w3.org/2000/svg"><path d="M10 30 H20 Q25 30 25 25 V12 L17 4 H16 M17 4 V12 H25" fill="none" stroke="#cccccc" stroke-width="2" stroke-linejoin="round"/><path d="M10 30 Q5 30 5 25 V16" fill="none" stroke="#cccccc" stroke-width="2"/><path d="M2 14 Q2 6 10 6 H15 M11 2 L15 6 L11 10" fill="none" stroke="#cccccc" stroke-width="2"/></svg>
<div class="r" style="left:0;top:0;width:3814px;height:2194px;clip-path:inset(264px 0 1358px 0);">
<div class="r" style="left:1068px;top:264px;width:1270px;height:572px;background:#1f1f1f;"></div>
<div class="r" style="left:1068px;top:300px;width:1270px;height:536px;background-image:linear-gradient(-45deg, rgba(204,204,204,0.2) 12.5%, rgba(0,0,0,0) 12.5%, rgba(0,0,0,0) 50%, rgba(204,204,204,0.2) 50%, rgba(204,204,204,0.2) 62.5%, rgba(0,0,0,0) 62.5%, rgba(0,0,0,0) 100%);background-size:16px 16px;"></div>
<div class="r" style="left:1068px;top:264px;width:1270px;height:36px;background:#562121;"></div>
<div class="r" style="left:1068px;top:264px;width:4px;height:36px;background:#b52a2a;"></div>
<div class="code" style="left:1033px;top:266px;color:#cccccc">1</div>
<div class="r" style="left:1050px;top:281px;width:17px;height:1.5px;background:#8a8a8a;"></div>
<div class="r" style="left:2311px;top:264px;width:27px;height:5px;background:#9a9a9a;"></div>
<div class="r" style="left:2466px;top:264px;width:1270px;height:36px;background:#50602f;"></div>
<div class="code" style="left:2431.0px;top:265px;color:#cccccc;font-size:25px;letter-spacing:-1px">1</div>
<div class="r" style="left:2448px;top:280px;width:17px;height:1.5px;background:#b4b4b4;"></div>
<div class="r" style="left:2455.75px;top:272px;width:1.5px;height:18px;background:#b4b4b4;"></div>
<div class="r" style="left:2466px;top:300px;width:1270px;height:36px;background:#50602f;"></div>
<div class="code" style="left:2431.0px;top:301px;color:#858585;font-size:25px;letter-spacing:-1px">2</div>
<div class="r" style="left:2448px;top:316px;width:17px;height:1.5px;background:#b4b4b4;"></div>
<div class="r" style="left:2455.75px;top:308px;width:1.5px;height:18px;background:#b4b4b4;"></div>
<div class="r" style="left:2466px;top:336px;width:1270px;height:36px;background:#50602f;"></div>
<div class="code" style="left:2431.0px;top:337px;color:#858585;font-size:25px;letter-spacing:-1px">3</div>
<div class="r" style="left:2448px;top:352px;width:17px;height:1.5px;background:#b4b4b4;"></div>
<div class="r" style="left:2455.75px;top:344px;width:1.5px;height:18px;background:#b4b4b4;"></div>
<div class="r" style="left:2466px;top:372px;width:1270px;height:36px;background:#50602f;"></div>
<div class="code" style="left:2431.0px;top:373px;color:#858585;font-size:25px;letter-spacing:-1px">4</div>
<div class="r" style="left:2448px;top:388px;width:17px;height:1.5px;background:#b4b4b4;"></div>
<div class="r" style="left:2455.75px;top:380px;width:1.5px;height:18px;background:#b4b4b4;"></div>
<div class="r" style="left:2466px;top:408px;width:1270px;height:36px;background:#50602f;"></div>
<div class="code" style="left:2431.0px;top:409px;color:#858585;font-size:25px;letter-spacing:-1px">5</div>
<div class="r" style="left:2448px;top:424px;width:17px;height:1.5px;background:#b4b4b4;"></div>
<div class="r" style="left:2455.75px;top:416px;width:1.5px;height:18px;background:#b4b4b4;"></div>
<div class="r" style="left:2466px;top:444px;width:1270px;height:36px;background:#50602f;"></div>
<div class="code" style="left:2431.0px;top:445px;color:#858585;font-size:25px;letter-spacing:-1px">6</div>
<div class="r" style="left:2448px;top:460px;width:17px;height:1.5px;background:#b4b4b4;"></div>
<div class="r" style="left:2455.75px;top:452px;width:1.5px;height:18px;background:#b4b4b4;"></div>
<div class="r" style="left:2466px;top:480px;width:1270px;height:36px;background:#50602f;"></div>
<div class="code" style="left:2431.0px;top:481px;color:#858585;font-size:25px;letter-spacing:-1px">7</div>
<div class="r" style="left:2448px;top:496px;width:17px;height:1.5px;background:#b4b4b4;"></div>
<div class="r" style="left:2455.75px;top:488px;width:1.5px;height:18px;background:#b4b4b4;"></div>
<div class="r" style="left:2466px;top:516px;width:1270px;height:36px;background:#50602f;"></div>
<div class="code" style="left:2431.0px;top:517px;color:#858585;font-size:25px;letter-spacing:-1px">8</div>
<div class="r" style="left:2448px;top:532px;width:17px;height:1.5px;background:#b4b4b4;"></div>
<div class="r" style="left:2455.75px;top:524px;width:1.5px;height:18px;background:#b4b4b4;"></div>
<div class="r" style="left:2466px;top:552px;width:1270px;height:36px;background:#50602f;"></div>
<div class="code" style="left:2431.0px;top:553px;color:#858585;font-size:25px;letter-spacing:-1px">9</div>
<div class="r" style="left:2448px;top:568px;width:17px;height:1.5px;background:#b4b4b4;"></div>
<div class="r" style="left:2455.75px;top:560px;width:1.5px;height:18px;background:#b4b4b4;"></div>
<div class="r" style="left:2466px;top:588px;width:1270px;height:36px;background:#50602f;"></div>
<div class="code" style="left:2417.0px;top:589px;color:#858585;font-size:25px;letter-spacing:-1px">10</div>
<div class="r" style="left:2448px;top:604px;width:17px;height:1.5px;background:#b4b4b4;"></div>
<div class="r" style="left:2455.75px;top:596px;width:1.5px;height:18px;background:#b4b4b4;"></div>
<div class="r" style="left:2466px;top:624px;width:1270px;height:36px;background:#50602f;"></div>
<div class="code" style="left:2417.0px;top:625px;color:#858585;font-size:25px;letter-spacing:-1px">11</div>
<div class="r" style="left:2448px;top:640px;width:17px;height:1.5px;background:#b4b4b4;"></div>
<div class="r" style="left:2455.75px;top:632px;width:1.5px;height:18px;background:#b4b4b4;"></div>
<div class="r" style="left:2466px;top:660px;width:1270px;height:36px;background:#50602f;"></div>
<div class="code" style="left:2417.0px;top:661px;color:#858585;font-size:25px;letter-spacing:-1px">12</div>
<div class="r" style="left:2448px;top:676px;width:17px;height:1.5px;background:#b4b4b4;"></div>
<div class="r" style="left:2455.75px;top:668px;width:1.5px;height:18px;background:#b4b4b4;"></div>
<div class="r" style="left:2466px;top:696px;width:1270px;height:36px;background:#50602f;"></div>
<div class="code" style="left:2417.0px;top:697px;color:#858585;font-size:25px;letter-spacing:-1px">13</div>
<div class="r" style="left:2448px;top:712px;width:17px;height:1.5px;background:#b4b4b4;"></div>
<div class="r" style="left:2455.75px;top:704px;width:1.5px;height:18px;background:#b4b4b4;"></div>
<div class="r" style="left:2466px;top:732px;width:1270px;height:36px;background:#50602f;"></div>
<div class="code" style="left:2417.0px;top:733px;color:#858585;font-size:25px;letter-spacing:-1px">14</div>
<div class="r" style="left:2448px;top:748px;width:17px;height:1.5px;background:#b4b4b4;"></div>
<div class="r" style="left:2455.75px;top:740px;width:1.5px;height:18px;background:#b4b4b4;"></div>
<div class="r" style="left:2466px;top:768px;width:1270px;height:36px;background:#50602f;"></div>
<div class="code" style="left:2417.0px;top:769px;color:#858585;font-size:25px;letter-spacing:-1px">15</div>
<div class="r" style="left:2448px;top:784px;width:17px;height:1.5px;background:#b4b4b4;"></div>
<div class="r" style="left:2455.75px;top:776px;width:1.5px;height:18px;background:#b4b4b4;"></div>
<div class="r" style="left:2466px;top:804px;width:1270px;height:32px;background:#3b4530;"></div>
<div class="code" style="left:2417.0px;top:805px;color:#858585;font-size:25px;letter-spacing:-1px">16</div>
<div class="r" style="left:2448px;top:820px;width:17px;height:1.5px;background:#b4b4b4;"></div>
<div class="r" style="left:2455.75px;top:812px;width:1.5px;height:18px;background:#b4b4b4;"></div>
<div class="r" style="left:2469px;top:264px;width:82px;height:36px;background:rgba(112,112,112,0.5);"></div>
<div class="r" style="left:2469px;top:588px;width:82px;height:36px;background:rgba(112,112,112,0.5);"></div>
<div class="code" style="left:2466px;top:266px;"><span style="color:#C586C0">export</span><span style="color:#D4D4D4"> </span><span style="color:#569CD6">interface</span><span style="color:#D4D4D4"> </span><span style="color:#4EC9B0">Weather</span><span style="color:#D4D4D4"> </span><span style="color:#FFD700">{</span></div>
<div class="code" style="left:2466px;top:302px;"><span style="color:#D4D4D4">  </span><span style="color:#9CDCFE">time</span><span style="color:#D4D4D4">: </span><span style="color:#4EC9B0">string</span><span style="color:#D4D4D4">;</span></div>
<div class="code" style="left:2466px;top:338px;"><span style="color:#D4D4D4">  </span><span style="color:#9CDCFE">temperature</span><span style="color:#D4D4D4">: </span><span style="color:#4EC9B0">number</span><span style="color:#D4D4D4">;</span></div>
<div class="code" style="left:2466px;top:374px;"><span style="color:#D4D4D4">  </span><span style="color:#9CDCFE">temperature_min</span><span style="color:#D4D4D4">: </span><span style="color:#4EC9B0">number</span><span style="color:#D4D4D4">;</span></div>
<div class="code" style="left:2466px;top:410px;"><span style="color:#D4D4D4">  </span><span style="color:#9CDCFE">temperature_max</span><span style="color:#D4D4D4">: </span><span style="color:#4EC9B0">number</span><span style="color:#D4D4D4">;</span></div>
<div class="code" style="left:2466px;top:446px;"><span style="color:#D4D4D4">  </span><span style="color:#9CDCFE">condition</span><span style="color:#D4D4D4">: </span><span style="color:#4EC9B0">string</span><span style="color:#D4D4D4">;</span></div>
<div class="code" style="left:2466px;top:482px;"><span style="color:#D4D4D4">  </span><span style="color:#9CDCFE">uv_index</span><span style="color:#D4D4D4">: </span><span style="color:#4EC9B0">number</span><span style="color:#D4D4D4">;</span></div>
<div class="code" style="left:2466px;top:518px;"><span style="color:#FFD700">}</span></div>
<div class="code" style="left:2466px;top:590px;"><span style="color:#C586C0">export</span><span style="color:#D4D4D4"> </span><span style="color:#569CD6">interface</span><span style="color:#D4D4D4"> </span><span style="color:#4EC9B0">WeatherResponse</span><span style="color:#D4D4D4"> </span><span style="color:#FFD700">{</span></div>
<div class="code" style="left:2466px;top:626px;"><span style="color:#D4D4D4">  </span><span style="color:#9CDCFE">location</span><span style="color:#D4D4D4">: </span><span style="color:#4EC9B0">string</span><span style="color:#D4D4D4">;</span></div>
<div class="code" style="left:2466px;top:662px;"><span style="color:#D4D4D4">  </span><span style="color:#9CDCFE">current</span><span style="color:#D4D4D4">: </span><span style="color:#4EC9B0">Weather</span><span style="color:#D4D4D4">;</span></div>
<div class="code" style="left:2466px;top:698px;"><span style="color:#D4D4D4">  </span><span style="color:#9CDCFE">hourly</span><span style="color:#D4D4D4">: </span><span style="color:#4EC9B0">Weather</span><span style="color:#DA70D6">[]</span><span style="color:#D4D4D4">;</span></div>
<div class="code" style="left:2466px;top:734px;"><span style="color:#D4D4D4">  </span><span style="color:#9CDCFE">daily</span><span style="color:#D4D4D4">: </span><span style="color:#4EC9B0">Weather</span><span style="color:#DA70D6">[]</span><span style="color:#D4D4D4">;</span></div>
<div class="code" style="left:2466px;top:770px;"><span style="color:#FFD700">}</span></div>
<div class="r" style="left:3708px;top:264px;width:28px;height:5px;background:#9a9a9a;"></div>
<div class="r" style="left:3718px;top:264px;width:9px;height:36px;background:#9a9a9a;"></div>
<div class="r" style="left:3718px;top:588px;width:9px;height:36px;background:#9a9a9a;"></div>
</div>
<div class="r" style="left:2466px;top:264px;width:4px;height:36px;background:#b4b4b4;"></div>
<div class="r" style="left:940px;top:836px;width:2832px;height:2px;background:#0078d4;"></div>
<div class="r" style="left:940px;top:855px;width:2832px;height:64px;background:#262626;"></div>
<svg class="i" style="left:966px;top:881.0px;width:20px;height:12px;" viewBox="0 0 20 12" xmlns="http://www.w3.org/2000/svg"><path d="M1 1 L10 10 L19 1" fill="none" stroke="#cccccc" stroke-width="2"/></svg>
<svg class="i" style="left:1009px;top:874.0px;width:28px;height:26px;" viewBox="-14 -13 28 26" xmlns="http://www.w3.org/2000/svg"><g fill="none" stroke="#519aba" stroke-width="1.6"><ellipse rx="12.5" ry="4.8"/><ellipse rx="12.5" ry="4.8" transform="rotate(60)"/><ellipse rx="12.5" ry="4.8" transform="rotate(120)"/></g><circle r="2.2" fill="#519aba"/></svg>
<div class="t" style="left:1047px;top:869.5px;font-size:27px;line-height:32px;color:#cccccc;font-weight:400;letter-spacing:0.4px;font-style:normal;">page.tsx</div>
<div class="t" style="left:1169px;top:870.4px;font-size:26px;line-height:31px;color:#a0a0a0;font-weight:400;letter-spacing:0.2px;font-style:normal;">app/weather</div>
<svg class="i" style="left:3707px;top:871.0px;width:28px;height:32px;" viewBox="0 0 28 32" xmlns="http://www.w3.org/2000/svg"><path d="M10 30 H20 Q25 30 25 25 V12 L17 4 H16 M17 4 V12 H25" fill="none" stroke="#cccccc" stroke-width="2" stroke-linejoin="round"/><path d="M10 30 Q5 30 5 25 V16" fill="none" stroke="#cccccc" stroke-width="2"/><path d="M2 14 Q2 6 10 6 H15 M11 2 L15 6 L11 10" fill="none" stroke="#cccccc" stroke-width="2"/></svg>
<div class="r" style="left:0;top:0;width:3814px;height:2194px;clip-path:inset(920px 0 85px 0);">
<div class="r" style="left:1068px;top:920px;width:1270px;height:1189px;background:#1f1f1f;"></div>
<div class="r" style="left:1068px;top:956px;width:1270px;height:1153px;background-image:linear-gradient(-45deg, rgba(204,204,204,0.2) 12.5%, rgba(0,0,0,0) 12.5%, rgba(0,0,0,0) 50%, rgba(204,204,204,0.2) 50%, rgba(204,204,204,0.2) 62.5%, rgba(0,0,0,0) 62.5%, rgba(0,0,0,0) 100%);background-size:16px 16px;"></div>
<div class="r" style="left:1068px;top:920px;width:1270px;height:36px;background:#562121;"></div>
<div class="r" style="left:1068px;top:920px;width:4px;height:36px;background:#b52a2a;"></div>
<div class="code" style="left:1033px;top:922px;color:#cccccc">1</div>
<div class="r" style="left:1050px;top:937px;width:17px;height:1.5px;background:#8a8a8a;"></div>
<div class="r" style="left:2311px;top:920px;width:27px;height:5px;background:#9a9a9a;"></div>
<div class="r" style="left:2466px;top:920px;width:1270px;height:36px;background:#50602f;"></div>
<div class="code" style="left:2431.0px;top:921px;color:#cccccc;font-size:25px;letter-spacing:-1px">1</div>
<div class="r" style="left:2448px;top:936px;width:17px;height:1.5px;background:#b4b4b4;"></div>
<div class="r" style="left:2455.75px;top:928px;width:1.5px;height:18px;background:#b4b4b4;"></div>
<div class="r" style="left:2466px;top:956px;width:1270px;height:36px;background:#50602f;"></div>
<div class="code" style="left:2431.0px;top:957px;color:#858585;font-size:25px;letter-spacing:-1px">2</div>
<div class="r" style="left:2448px;top:972px;width:17px;height:1.5px;background:#b4b4b4;"></div>
<div class="r" style="left:2455.75px;top:964px;width:1.5px;height:18px;background:#b4b4b4;"></div>
<div class="r" style="left:2466px;top:992px;width:1270px;height:36px;background:#50602f;"></div>
<div class="code" style="left:2431.0px;top:993px;color:#858585;font-size:25px;letter-spacing:-1px">3</div>
<div class="r" style="left:2448px;top:1008px;width:17px;height:1.5px;background:#b4b4b4;"></div>
<div class="r" style="left:2455.75px;top:1000px;width:1.5px;height:18px;background:#b4b4b4;"></div>
<div class="r" style="left:2466px;top:1028px;width:1270px;height:36px;background:#50602f;"></div>
<div class="code" style="left:2431.0px;top:1029px;color:#858585;font-size:25px;letter-spacing:-1px">4</div>
<div class="r" style="left:2448px;top:1044px;width:17px;height:1.5px;background:#b4b4b4;"></div>
<div class="r" style="left:2455.75px;top:1036px;width:1.5px;height:18px;background:#b4b4b4;"></div>
<div class="r" style="left:2466px;top:1064px;width:1270px;height:36px;background:#50602f;"></div>
<div class="code" style="left:2431.0px;top:1065px;color:#858585;font-size:25px;letter-spacing:-1px">5</div>
<div class="r" style="left:2448px;top:1080px;width:17px;height:1.5px;background:#b4b4b4;"></div>
<div class="r" style="left:2455.75px;top:1072px;width:1.5px;height:18px;background:#b4b4b4;"></div>
<div class="r" style="left:2466px;top:1100px;width:1270px;height:36px;background:#50602f;"></div>
<div class="code" style="left:2431.0px;top:1101px;color:#858585;font-size:25px;letter-spacing:-1px">6</div>
<div class="r" style="left:2448px;top:1116px;width:17px;height:1.5px;background:#b4b4b4;"></div>
<div class="r" style="left:2455.75px;top:1108px;width:1.5px;height:18px;background:#b4b4b4;"></div>
<div class="r" style="left:2466px;top:1136px;width:1270px;height:36px;background:#50602f;"></div>
<div class="code" style="left:2431.0px;top:1137px;color:#858585;font-size:25px;letter-spacing:-1px">7</div>
<div class="r" style="left:2448px;top:1152px;width:17px;height:1.5px;background:#b4b4b4;"></div>
<div class="r" style="left:2455.75px;top:1144px;width:1.5px;height:18px;background:#b4b4b4;"></div>
<div class="r" style="left:2466px;top:1172px;width:1270px;height:36px;background:#50602f;"></div>
<div class="code" style="left:2431.0px;top:1173px;color:#858585;font-size:25px;letter-spacing:-1px">8</div>
<div class="r" style="left:2448px;top:1188px;width:17px;height:1.5px;background:#b4b4b4;"></div>
<div class="r" style="left:2455.75px;top:1180px;width:1.5px;height:18px;background:#b4b4b4;"></div>
<div class="r" style="left:2466px;top:1208px;width:1270px;height:36px;background:#50602f;"></div>
<div class="code" style="left:2431.0px;top:1209px;color:#858585;font-size:25px;letter-spacing:-1px">9</div>
<div class="r" style="left:2448px;top:1224px;width:17px;height:1.5px;background:#b4b4b4;"></div>
<div class="r" style="left:2455.75px;top:1216px;width:1.5px;height:18px;background:#b4b4b4;"></div>
<div class="r" style="left:2466px;top:1244px;width:1270px;height:36px;background:#50602f;"></div>
<div class="code" style="left:2417.0px;top:1245px;color:#858585;font-size:25px;letter-spacing:-1px">10</div>
<div class="r" style="left:2448px;top:1260px;width:17px;height:1.5px;background:#b4b4b4;"></div>
<div class="r" style="left:2455.75px;top:1252px;width:1.5px;height:18px;background:#b4b4b4;"></div>
<div class="r" style="left:2466px;top:1280px;width:1270px;height:36px;background:#50602f;"></div>
<div class="code" style="left:2417.0px;top:1281px;color:#858585;font-size:25px;letter-spacing:-1px">11</div>
<div class="r" style="left:2448px;top:1296px;width:17px;height:1.5px;background:#b4b4b4;"></div>
<div class="r" style="left:2455.75px;top:1288px;width:1.5px;height:18px;background:#b4b4b4;"></div>
<div class="r" style="left:2466px;top:1316px;width:1270px;height:36px;background:#50602f;"></div>
<div class="code" style="left:2417.0px;top:1317px;color:#858585;font-size:25px;letter-spacing:-1px">12</div>
<div class="r" style="left:2448px;top:1332px;width:17px;height:1.5px;background:#b4b4b4;"></div>
<div class="r" style="left:2455.75px;top:1324px;width:1.5px;height:18px;background:#b4b4b4;"></div>
<div class="r" style="left:2466px;top:1352px;width:1270px;height:36px;background:#50602f;"></div>
<div class="code" style="left:2417.0px;top:1353px;color:#858585;font-size:25px;letter-spacing:-1px">13</div>
<div class="r" style="left:2448px;top:1368px;width:17px;height:1.5px;background:#b4b4b4;"></div>
<div class="r" style="left:2455.75px;top:1360px;width:1.5px;height:18px;background:#b4b4b4;"></div>
<div class="r" style="left:2466px;top:1388px;width:1270px;height:36px;background:#50602f;"></div>
<div class="code" style="left:2417.0px;top:1389px;color:#858585;font-size:25px;letter-spacing:-1px">14</div>
<div class="r" style="left:2448px;top:1404px;width:17px;height:1.5px;background:#b4b4b4;"></div>
<div class="r" style="left:2455.75px;top:1396px;width:1.5px;height:18px;background:#b4b4b4;"></div>
<div class="r" style="left:2466px;top:1424px;width:1270px;height:36px;background:#50602f;"></div>
<div class="code" style="left:2417.0px;top:1425px;color:#858585;font-size:25px;letter-spacing:-1px">15</div>
<div class="r" style="left:2448px;top:1440px;width:17px;height:1.5px;background:#b4b4b4;"></div>
<div class="r" style="left:2455.75px;top:1432px;width:1.5px;height:18px;background:#b4b4b4;"></div>
<div class="r" style="left:2466px;top:1460px;width:1270px;height:36px;background:#50602f;"></div>
<div class="code" style="left:2417.0px;top:1461px;color:#858585;font-size:25px;letter-spacing:-1px">16</div>
<div class="r" style="left:2448px;top:1476px;width:17px;height:1.5px;background:#b4b4b4;"></div>
<div class="r" style="left:2455.75px;top:1468px;width:1.5px;height:18px;background:#b4b4b4;"></div>
<div class="r" style="left:2466px;top:1496px;width:1270px;height:36px;background:#50602f;"></div>
<div class="code" style="left:2417.0px;top:1497px;color:#858585;font-size:25px;letter-spacing:-1px">17</div>
<div class="r" style="left:2448px;top:1512px;width:17px;height:1.5px;background:#b4b4b4;"></div>
<div class="r" style="left:2455.75px;top:1504px;width:1.5px;height:18px;background:#b4b4b4;"></div>
<div class="r" style="left:2466px;top:1532px;width:1270px;height:36px;background:#50602f;"></div>
<div class="code" style="left:2417.0px;top:1533px;color:#858585;font-size:25px;letter-spacing:-1px">18</div>
<div class="r" style="left:2448px;top:1548px;width:17px;height:1.5px;background:#b4b4b4;"></div>
<div class="r" style="left:2455.75px;top:1540px;width:1.5px;height:18px;background:#b4b4b4;"></div>
<div class="r" style="left:2466px;top:1568px;width:1270px;height:36px;background:#50602f;"></div>
<div class="code" style="left:2417.0px;top:1569px;color:#858585;font-size:25px;letter-spacing:-1px">19</div>
<div class="r" style="left:2448px;top:1584px;width:17px;height:1.5px;background:#b4b4b4;"></div>
<div class="r" style="left:2455.75px;top:1576px;width:1.5px;height:18px;background:#b4b4b4;"></div>
<div class="r" style="left:2466px;top:1604px;width:1270px;height:36px;background:#50602f;"></div>
<div class="code" style="left:2417.0px;top:1605px;color:#858585;font-size:25px;letter-spacing:-1px">20</div>
<div class="r" style="left:2448px;top:1620px;width:17px;height:1.5px;background:#b4b4b4;"></div>
<div class="r" style="left:2455.75px;top:1612px;width:1.5px;height:18px;background:#b4b4b4;"></div>
<div class="r" style="left:2466px;top:1640px;width:1270px;height:36px;background:#50602f;"></div>
<div class="code" style="left:2417.0px;top:1641px;color:#858585;font-size:25px;letter-spacing:-1px">21</div>
<div class="r" style="left:2448px;top:1656px;width:17px;height:1.5px;background:#b4b4b4;"></div>
<div class="r" style="left:2455.75px;top:1648px;width:1.5px;height:18px;background:#b4b4b4;"></div>
<div class="r" style="left:2466px;top:1676px;width:1270px;height:36px;background:#50602f;"></div>
<div class="code" style="left:2417.0px;top:1677px;color:#858585;font-size:25px;letter-spacing:-1px">22</div>
<div class="r" style="left:2448px;top:1692px;width:17px;height:1.5px;background:#b4b4b4;"></div>
<div class="r" style="left:2455.75px;top:1684px;width:1.5px;height:18px;background:#b4b4b4;"></div>
<div class="r" style="left:2466px;top:1712px;width:1270px;height:36px;background:#50602f;"></div>
<div class="code" style="left:2417.0px;top:1713px;color:#858585;font-size:25px;letter-spacing:-1px">23</div>
<div class="r" style="left:2448px;top:1728px;width:17px;height:1.5px;background:#b4b4b4;"></div>
<div class="r" style="left:2455.75px;top:1720px;width:1.5px;height:18px;background:#b4b4b4;"></div>
<div class="r" style="left:2466px;top:1748px;width:1270px;height:36px;background:#50602f;"></div>
<div class="code" style="left:2417.0px;top:1749px;color:#858585;font-size:25px;letter-spacing:-1px">24</div>
<div class="r" style="left:2448px;top:1764px;width:17px;height:1.5px;background:#b4b4b4;"></div>
<div class="r" style="left:2455.75px;top:1756px;width:1.5px;height:18px;background:#b4b4b4;"></div>
<div class="r" style="left:2466px;top:1784px;width:1270px;height:36px;background:#50602f;"></div>
<div class="code" style="left:2417.0px;top:1785px;color:#858585;font-size:25px;letter-spacing:-1px">25</div>
<div class="r" style="left:2448px;top:1800px;width:17px;height:1.5px;background:#b4b4b4;"></div>
<div class="r" style="left:2455.75px;top:1792px;width:1.5px;height:18px;background:#b4b4b4;"></div>
<div class="r" style="left:2466px;top:1820px;width:1270px;height:36px;background:#50602f;"></div>
<div class="code" style="left:2417.0px;top:1821px;color:#858585;font-size:25px;letter-spacing:-1px">26</div>
<div class="r" style="left:2448px;top:1836px;width:17px;height:1.5px;background:#b4b4b4;"></div>
<div class="r" style="left:2455.75px;top:1828px;width:1.5px;height:18px;background:#b4b4b4;"></div>
<div class="r" style="left:2466px;top:1856px;width:1270px;height:36px;background:#50602f;"></div>
<div class="code" style="left:2417.0px;top:1857px;color:#858585;font-size:25px;letter-spacing:-1px">27</div>
<div class="r" style="left:2448px;top:1872px;width:17px;height:1.5px;background:#b4b4b4;"></div>
<div class="r" style="left:2455.75px;top:1864px;width:1.5px;height:18px;background:#b4b4b4;"></div>
<div class="r" style="left:2466px;top:1892px;width:1270px;height:36px;background:#50602f;"></div>
<div class="code" style="left:2417.0px;top:1893px;color:#858585;font-size:25px;letter-spacing:-1px">28</div>
<div class="r" style="left:2448px;top:1908px;width:17px;height:1.5px;background:#b4b4b4;"></div>
<div class="r" style="left:2455.75px;top:1900px;width:1.5px;height:18px;background:#b4b4b4;"></div>
<div class="r" style="left:2466px;top:1928px;width:1270px;height:36px;background:#50602f;"></div>
<div class="code" style="left:2417.0px;top:1929px;color:#858585;font-size:25px;letter-spacing:-1px">29</div>
<div class="r" style="left:2448px;top:1944px;width:17px;height:1.5px;background:#b4b4b4;"></div>
<div class="r" style="left:2455.75px;top:1936px;width:1.5px;height:18px;background:#b4b4b4;"></div>
<div class="r" style="left:2466px;top:1964px;width:1270px;height:36px;background:#50602f;"></div>
<div class="code" style="left:2417.0px;top:1965px;color:#858585;font-size:25px;letter-spacing:-1px">30</div>
<div class="r" style="left:2448px;top:1980px;width:17px;height:1.5px;background:#b4b4b4;"></div>
<div class="r" style="left:2455.75px;top:1972px;width:1.5px;height:18px;background:#b4b4b4;"></div>
<div class="r" style="left:2466px;top:2000px;width:1270px;height:36px;background:#50602f;"></div>
<div class="code" style="left:2417.0px;top:2001px;color:#858585;font-size:25px;letter-spacing:-1px">31</div>
<div class="r" style="left:2448px;top:2016px;width:17px;height:1.5px;background:#b4b4b4;"></div>
<div class="r" style="left:2455.75px;top:2008px;width:1.5px;height:18px;background:#b4b4b4;"></div>
<div class="r" style="left:2466px;top:2036px;width:1270px;height:36px;background:#50602f;"></div>
<div class="code" style="left:2417.0px;top:2037px;color:#858585;font-size:25px;letter-spacing:-1px">32</div>
<div class="r" style="left:2448px;top:2052px;width:17px;height:1.5px;background:#b4b4b4;"></div>
<div class="r" style="left:2455.75px;top:2044px;width:1.5px;height:18px;background:#b4b4b4;"></div>
<div class="r" style="left:2466px;top:2072px;width:1270px;height:36px;background:#50602f;"></div>
<div class="code" style="left:2417.0px;top:2073px;color:#858585;font-size:25px;letter-spacing:-1px">33</div>
<div class="r" style="left:2448px;top:2088px;width:17px;height:1.5px;background:#b4b4b4;"></div>
<div class="r" style="left:2455.75px;top:2080px;width:1.5px;height:18px;background:#b4b4b4;"></div>
<div class="r" style="left:2467.0px;top:1172px;width:1.5px;height:36px;background:rgba(255,255,255,0.2);"></div>
<div class="r" style="left:2467.0px;top:1208px;width:1.5px;height:36px;background:rgba(255,255,255,0.2);"></div>
<div class="r" style="left:2467.0px;top:1244px;width:1.5px;height:36px;background:rgba(255,255,255,0.2);"></div>
<div class="r" style="left:2467.0px;top:1280px;width:1.5px;height:36px;background:rgba(255,255,255,0.2);"></div>
<div class="r" style="left:2467.0px;top:1316px;width:1.5px;height:36px;background:rgba(255,255,255,0.2);"></div>
<div class="r" style="left:2467.0px;top:1352px;width:1.5px;height:36px;background:rgba(255,255,255,0.2);"></div>
<div class="r" style="left:2467.0px;top:1388px;width:1.5px;height:36px;background:rgba(255,255,255,0.2);"></div>
<div class="r" style="left:2467.0px;top:1424px;width:1.5px;height:36px;background:rgba(255,255,255,0.2);"></div>
<div class="r" style="left:2467.0px;top:1460px;width:1.5px;height:36px;background:rgba(255,255,255,0.2);"></div>
<div class="r" style="left:2495.9px;top:1460px;width:1.5px;height:36px;background:rgba(255,255,255,0.2);"></div>
<div class="r" style="left:2467.0px;top:1496px;width:1.5px;height:36px;background:rgba(255,255,255,0.2);"></div>
<div class="r" style="left:2495.9px;top:1496px;width:1.5px;height:36px;background:rgba(255,255,255,0.2);"></div>
<div class="r" style="left:2524.8px;top:1496px;width:1.5px;height:36px;background:rgba(255,255,255,0.2);"></div>
<div class="r" style="left:2467.0px;top:1532px;width:1.5px;height:36px;background:rgba(255,255,255,0.2);"></div>
<div class="r" style="left:2495.9px;top:1532px;width:1.5px;height:36px;background:rgba(255,255,255,0.2);"></div>
<div class="r" style="left:2524.8px;top:1532px;width:1.5px;height:36px;background:rgba(255,255,255,0.2);"></div>
<div class="r" style="left:2553.7px;top:1532px;width:1.5px;height:36px;background:rgba(255,255,255,0.2);"></div>
<div class="r" style="left:2467.0px;top:1568px;width:1.5px;height:36px;background:rgba(255,255,255,0.2);"></div>
<div class="r" style="left:2495.9px;top:1568px;width:1.5px;height:36px;background:rgba(255,255,255,0.2);"></div>
<div class="r" style="left:2524.8px;top:1568px;width:1.5px;height:36px;background:rgba(255,255,255,0.2);"></div>
<div class="r" style="left:2553.7px;top:1568px;width:1.5px;height:36px;background:rgba(255,255,255,0.2);"></div>
<div class="r" style="left:2467.0px;top:1604px;width:1.5px;height:36px;background:rgba(255,255,255,0.2);"></div>
<div class="r" style="left:2495.9px;top:1604px;width:1.5px;height:36px;background:rgba(255,255,255,0.2);"></div>
<div class="r" style="left:2524.8px;top:1604px;width:1.5px;height:36px;background:rgba(255,255,255,0.2);"></div>
<div class="r" style="left:2553.7px;top:1604px;width:1.5px;height:36px;background:rgba(255,255,255,0.2);"></div>
<div class="r" style="left:2467.0px;top:1640px;width:1.5px;height:36px;background:rgba(255,255,255,0.2);"></div>
<div class="r" style="left:2495.9px;top:1640px;width:1.5px;height:36px;background:rgba(255,255,255,0.2);"></div>
<div class="r" style="left:2524.8px;top:1640px;width:1.5px;height:36px;background:rgba(255,255,255,0.2);"></div>
<div class="r" style="left:2553.7px;top:1640px;width:1.5px;height:36px;background:rgba(255,255,255,0.2);"></div>
<div class="r" style="left:2467.0px;top:1676px;width:1.5px;height:36px;background:rgba(255,255,255,0.2);"></div>
<div class="r" style="left:2495.9px;top:1676px;width:1.5px;height:36px;background:rgba(255,255,255,0.2);"></div>
<div class="r" style="left:2524.8px;top:1676px;width:1.5px;height:36px;background:rgba(255,255,255,0.2);"></div>
<div class="r" style="left:2553.7px;top:1676px;width:1.5px;height:36px;background:rgba(255,255,255,0.2);"></div>
<div class="r" style="left:2467.0px;top:1712px;width:1.5px;height:36px;background:rgba(255,255,255,0.2);"></div>
<div class="r" style="left:2495.9px;top:1712px;width:1.5px;height:36px;background:rgba(255,255,255,0.2);"></div>
<div class="r" style="left:2524.8px;top:1712px;width:1.5px;height:36px;background:rgba(255,255,255,0.2);"></div>
<div class="r" style="left:2553.7px;top:1712px;width:1.5px;height:36px;background:rgba(255,255,255,0.2);"></div>
<div class="r" style="left:2582.6px;top:1712px;width:1.5px;height:36px;background:rgba(255,255,255,0.2);"></div>
<div class="r" style="left:2467.0px;top:1748px;width:1.5px;height:36px;background:rgba(255,255,255,0.2);"></div>
<div class="r" style="left:2495.9px;top:1748px;width:1.5px;height:36px;background:rgba(255,255,255,0.2);"></div>
<div class="r" style="left:2524.8px;top:1748px;width:1.5px;height:36px;background:rgba(255,255,255,0.2);"></div>
<div class="r" style="left:2553.7px;top:1748px;width:1.5px;height:36px;background:rgba(255,255,255,0.2);"></div>
<div class="r" style="left:2467.0px;top:1784px;width:1.5px;height:36px;background:rgba(255,255,255,0.2);"></div>
<div class="r" style="left:2495.9px;top:1784px;width:1.5px;height:36px;background:rgba(255,255,255,0.2);"></div>
<div class="r" style="left:2524.8px;top:1784px;width:1.5px;height:36px;background:rgba(255,255,255,0.2);"></div>
<div class="r" style="left:2553.7px;top:1784px;width:1.5px;height:36px;background:rgba(255,255,255,0.2);"></div>
<div class="r" style="left:2467.0px;top:1820px;width:1.5px;height:36px;background:rgba(255,255,255,0.2);"></div>
<div class="r" style="left:2495.9px;top:1820px;width:1.5px;height:36px;background:rgba(255,255,255,0.2);"></div>
<div class="r" style="left:2524.8px;top:1820px;width:1.5px;height:36px;background:rgba(255,255,255,0.2);"></div>
<div class="r" style="left:2553.7px;top:1820px;width:1.5px;height:36px;background:rgba(255,255,255,0.2);"></div>
<div class="r" style="left:2467.0px;top:1856px;width:1.5px;height:36px;background:rgba(255,255,255,0.2);"></div>
<div class="r" style="left:2495.9px;top:1856px;width:1.5px;height:36px;background:rgba(255,255,255,0.2);"></div>
<div class="r" style="left:2524.8px;top:1856px;width:1.5px;height:36px;background:rgba(255,255,255,0.2);"></div>
<div class="r" style="left:2553.7px;top:1856px;width:1.5px;height:36px;background:rgba(255,255,255,0.2);"></div>
<div class="r" style="left:2467.0px;top:1892px;width:1.5px;height:36px;background:rgba(255,255,255,0.2);"></div>
<div class="r" style="left:2495.9px;top:1892px;width:1.5px;height:36px;background:rgba(255,255,255,0.2);"></div>
<div class="r" style="left:2524.8px;top:1892px;width:1.5px;height:36px;background:rgba(255,255,255,0.2);"></div>
<div class="r" style="left:2467.0px;top:1928px;width:1.5px;height:36px;background:rgba(255,255,255,0.2);"></div>
<div class="r" style="left:2495.9px;top:1928px;width:1.5px;height:36px;background:rgba(255,255,255,0.2);"></div>
<div class="r" style="left:2524.8px;top:1928px;width:1.5px;height:36px;background:rgba(255,255,255,0.2);"></div>
<div class="r" style="left:2553.7px;top:1928px;width:1.5px;height:36px;background:rgba(255,255,255,0.2);"></div>
<div class="r" style="left:2467.0px;top:1964px;width:1.5px;height:36px;background:rgba(255,255,255,0.2);"></div>
<div class="r" style="left:2495.9px;top:1964px;width:1.5px;height:36px;background:rgba(255,255,255,0.2);"></div>
<div class="r" style="left:2524.8px;top:1964px;width:1.5px;height:36px;background:rgba(255,255,255,0.2);"></div>
<div class="r" style="left:2467.0px;top:2000px;width:1.5px;height:36px;background:rgba(255,255,255,0.2);"></div>
<div class="r" style="left:2495.9px;top:2000px;width:1.5px;height:36px;background:rgba(255,255,255,0.2);"></div>
<div class="r" style="left:2524.8px;top:2000px;width:1.5px;height:36px;background:rgba(255,255,255,0.2);"></div>
<div class="r" style="left:2553.7px;top:2000px;width:1.5px;height:36px;background:rgba(255,255,255,0.2);"></div>
<div class="r" style="left:2467.0px;top:2036px;width:1.5px;height:36px;background:rgba(255,255,255,0.2);"></div>
<div class="r" style="left:2495.9px;top:2036px;width:1.5px;height:36px;background:rgba(255,255,255,0.2);"></div>
<div class="r" style="left:2524.8px;top:2036px;width:1.5px;height:36px;background:rgba(255,255,255,0.2);"></div>
<div class="r" style="left:2467.0px;top:2072px;width:1.5px;height:36px;background:rgba(255,255,255,0.2);"></div>
<div class="r" style="left:2495.9px;top:2072px;width:1.5px;height:36px;background:rgba(255,255,255,0.2);"></div>
<div class="code" style="left:2466px;top:922px;"><span style="color:#CE9178">&#x27;use client&#x27;</span><span style="color:#D4D4D4">;</span></div>
<div class="code" style="left:2466px;top:994px;"><span style="color:#C586C0">import</span><span style="color:#D4D4D4"> </span><span style="color:#FFD700">{</span><span style="color:#D4D4D4"> </span><span style="color:#9CDCFE">useSearchParams</span><span style="color:#D4D4D4"> </span><span style="color:#FFD700">}</span><span style="color:#D4D4D4"> </span><span style="color:#C586C0">from</span><span style="color:#D4D4D4"> </span><span style="color:#CE9178">&#x27;next/navigation&#x27;</span><span style="color:#D4D4D4">;</span></div>
<div class="code" style="left:2466px;top:1030px;"><span style="color:#C586C0">import</span><span style="color:#D4D4D4"> </span><span style="color:#FFD700">{</span><span style="color:#D4D4D4"> </span><span style="color:#9CDCFE">useEffect</span><span style="color:#D4D4D4">, </span><span style="color:#9CDCFE">useState</span><span style="color:#D4D4D4"> </span><span style="color:#FFD700">}</span><span style="color:#D4D4D4"> </span><span style="color:#C586C0">from</span><span style="color:#D4D4D4"> </span><span style="color:#CE9178">&#x27;react&#x27;</span><span style="color:#D4D4D4">;</span></div>
<div class="code" style="left:2466px;top:1066px;"><span style="color:#C586C0">import</span><span style="color:#D4D4D4"> </span><span style="color:#FFD700">{</span><span style="color:#D4D4D4"> </span><span style="color:#9CDCFE">WeatherResponse</span><span style="color:#D4D4D4"> </span><span style="color:#FFD700">}</span><span style="color:#D4D4D4"> </span><span style="color:#C586C0">from</span><span style="color:#D4D4D4"> </span><span style="color:#CE9178">&#x27;../types/weather&#x27;</span><span style="color:#D4D4D4">;</span></div>
<div class="code" style="left:2466px;top:1138px;"><span style="color:#C586C0">export</span><span style="color:#D4D4D4"> </span><span style="color:#C586C0">default</span><span style="color:#D4D4D4"> </span><span style="color:#569CD6">function</span><span style="color:#D4D4D4"> </span><span style="color:#DCDCAA">WeatherPage</span><span style="color:#FFD700">()</span><span style="color:#D4D4D4"> </span><span style="color:#FFD700">{</span></div>
<div class="code" style="left:2466px;top:1174px;"><span style="color:#D4D4D4">  </span><span style="color:#569CD6">const</span><span style="color:#D4D4D4"> </span><span style="color:#4FC1FF">searchParams</span><span style="color:#D4D4D4"> = </span><span style="color:#DCDCAA">useSearchParams</span><span style="color:#DA70D6">()</span><span style="color:#D4D4D4">;</span></div>
<div class="code" style="left:2466px;top:1210px;"><span style="color:#D4D4D4">  </span><span style="color:#569CD6">const</span><span style="color:#D4D4D4"> </span><span style="color:#4FC1FF">location</span><span style="color:#D4D4D4"> = </span><span style="color:#9CDCFE">searchParams</span><span style="color:#D4D4D4">.</span><span style="color:#DCDCAA">get</span><span style="color:#DA70D6">(</span><span style="color:#CE9178">&#x27;location&#x27;</span><span style="color:#DA70D6">)</span><span style="color:#D4D4D4"> || </span><span style="color:#CE9178">&#x27;San Francisco&#x27;</span><span style="color:#D4D4D4">;</span></div>
<div class="code" style="left:2466px;top:1282px;"><span style="color:#D4D4D4">  </span><span style="color:#569CD6">const</span><span style="color:#D4D4D4"> </span><span style="color:#DA70D6">[</span><span style="color:#4FC1FF">data</span><span style="color:#D4D4D4">, </span><span style="color:#4FC1FF">setData</span><span style="color:#DA70D6">]</span><span style="color:#D4D4D4"> = </span><span style="color:#DCDCAA">useState</span><span style="color:#DA70D6">&lt;</span><span style="color:#4EC9B0">WeatherResponse</span><span style="color:#D4D4D4"> | </span><span style="color:#4EC9B0">null</span><span style="color:#DA70D6">&gt;(</span><span style="color:#569CD6">null</span><span style="color:#DA70D6">)</span><span style="color:#D4D4D4">;</span></div>
<div class="code" style="left:2466px;top:1318px;"><span style="color:#D4D4D4">  </span><span style="color:#569CD6">const</span><span style="color:#D4D4D4"> </span><span style="color:#DA70D6">[</span><span style="color:#4FC1FF">loading</span><span style="color:#D4D4D4">, </span><span style="color:#4FC1FF">setLoading</span><span style="color:#DA70D6">]</span><span style="color:#D4D4D4"> = </span><span style="color:#DCDCAA">useState</span><span style="color:#DA70D6">(</span><span style="color:#569CD6">true</span><span style="color:#DA70D6">)</span><span style="color:#D4D4D4">;</span></div>
<div class="code" style="left:2466px;top:1354px;"><span style="color:#D4D4D4">  </span><span style="color:#569CD6">const</span><span style="color:#D4D4D4"> </span><span style="color:#DA70D6">[</span><span style="color:#4FC1FF">error</span><span style="color:#D4D4D4">, </span><span style="color:#4FC1FF">setError</span><span style="color:#DA70D6">]</span><span style="color:#D4D4D4"> = </span><span style="color:#DCDCAA">useState</span><span style="color:#DA70D6">&lt;</span><span style="color:#4EC9B0">string</span><span style="color:#D4D4D4"> | </span><span style="color:#4EC9B0">null</span><span style="color:#DA70D6">&gt;(</span><span style="color:#569CD6">null</span><span style="color:#DA70D6">)</span><span style="color:#D4D4D4">;</span></div>
<div class="code" style="left:2466px;top:1426px;"><span style="color:#D4D4D4">  </span><span style="color:#DCDCAA">useEffect</span><span style="color:#DA70D6">(</span><span style="color:#179FFF">()</span><span style="color:#D4D4D4"> </span><span style="color:#569CD6">=&gt;</span><span style="color:#D4D4D4"> </span><span style="color:#179FFF">{</span></div>
<div class="code" style="left:2466px;top:1462px;"><span style="color:#D4D4D4">    </span><span style="color:#569CD6">const</span><span style="color:#D4D4D4"> </span><span style="color:#DCDCAA">fetchWeather</span><span style="color:#D4D4D4"> = </span><span style="color:#569CD6">async</span><span style="color:#D4D4D4"> </span><span style="color:#FFD700">()</span><span style="color:#D4D4D4"> </span><span style="color:#569CD6">=&gt;</span><span style="color:#D4D4D4"> </span><span style="color:#FFD700">{</span></div>
<div class="code" style="left:2466px;top:1498px;"><span style="color:#D4D4D4">      </span><span style="color:#C586C0">try</span><span style="color:#D4D4D4"> </span><span style="color:#DA70D6">{</span></div>
<div class="code" style="left:2466px;top:1534px;"><span style="color:#D4D4D4">        </span><span style="color:#DCDCAA">setLoading</span><span style="color:#179FFF">(</span><span style="color:#569CD6">true</span><span style="color:#179FFF">)</span><span style="color:#D4D4D4">;</span></div>
<div class="code" style="left:2466px;top:1570px;"><span style="color:#D4D4D4">        </span><span style="color:#DCDCAA">setError</span><span style="color:#179FFF">(</span><span style="color:#569CD6">null</span><span style="color:#179FFF">)</span><span style="color:#D4D4D4">;</span></div>
<div class="code" style="left:2466px;top:1606px;"><span style="color:#D4D4D4">        </span><span style="color:#569CD6">const</span><span style="color:#D4D4D4"> </span><span style="color:#4FC1FF">response</span><span style="color:#D4D4D4"> = </span><span style="color:#C586C0">await</span><span style="color:#D4D4D4"> </span><span style="color:#DCDCAA">fetch</span><span style="color:#179FFF">(</span><span style="color:#CE9178">`/api/weather?location=</span><span style="color:#569CD6">${</span><span style="color:#DCDCAA">encodeURIComponent</span><span style="color:#FFD700">(</span><span style="color:#9CDCFE">locatio</span></div>
<div class="code" style="left:2466px;top:1678px;"><span style="color:#D4D4D4">        </span><span style="color:#C586C0">if</span><span style="color:#D4D4D4"> </span><span style="color:#179FFF">(</span><span style="color:#D4D4D4">!</span><span style="color:#9CDCFE">response</span><span style="color:#D4D4D4">.</span><span style="color:#9CDCFE">ok</span><span style="color:#179FFF">)</span><span style="color:#D4D4D4"> </span><span style="color:#179FFF">{</span></div>
<div class="code" style="left:2466px;top:1714px;"><span style="color:#D4D4D4">          </span><span style="color:#C586C0">throw</span><span style="color:#D4D4D4"> </span><span style="color:#569CD6">new</span><span style="color:#D4D4D4"> </span><span style="color:#DCDCAA">Error</span><span style="color:#FFD700">(</span><span style="color:#CE9178">&#x27;Failed to fetch weather data&#x27;</span><span style="color:#FFD700">)</span><span style="color:#D4D4D4">;</span></div>
<div class="code" style="left:2466px;top:1750px;"><span style="color:#D4D4D4">        </span><span style="color:#179FFF">}</span></div>
<div class="code" style="left:2466px;top:1822px;"><span style="color:#D4D4D4">        </span><span style="color:#569CD6">const</span><span style="color:#D4D4D4"> </span><span style="color:#4FC1FF">weatherData</span><span style="color:#D4D4D4">: </span><span style="color:#4EC9B0">WeatherResponse</span><span style="color:#D4D4D4"> = </span><span style="color:#C586C0">await</span><span style="color:#D4D4D4"> </span><span style="color:#9CDCFE">response</span><span style="color:#D4D4D4">.</span><span style="color:#DCDCAA">json</span><span style="color:#179FFF">()</span><span style="color:#D4D4D4">;</span></div>
<div class="code" style="left:2466px;top:1858px;"><span style="color:#D4D4D4">        </span><span style="color:#DCDCAA">setData</span><span style="color:#179FFF">(</span><span style="color:#9CDCFE">weatherData</span><span style="color:#179FFF">)</span><span style="color:#D4D4D4">;</span></div>
<div class="code" style="left:2466px;top:1894px;"><span style="color:#D4D4D4">      </span><span style="color:#DA70D6">}</span><span style="color:#D4D4D4"> </span><span style="color:#C586C0">catch</span><span style="color:#D4D4D4"> </span><span style="color:#DA70D6">(</span><span style="color:#9CDCFE">err</span><span style="color:#DA70D6">)</span><span style="color:#D4D4D4"> </span><span style="color:#DA70D6">{</span></div>
<div class="code" style="left:2466px;top:1930px;"><span style="color:#D4D4D4">        </span><span style="color:#DCDCAA">setError</span><span style="color:#179FFF">(</span><span style="color:#9CDCFE">err</span><span style="color:#D4D4D4"> </span><span style="color:#569CD6">instanceof</span><span style="color:#D4D4D4"> </span><span style="color:#4EC9B0">Error</span><span style="color:#D4D4D4"> ? </span><span style="color:#9CDCFE">err</span><span style="color:#D4D4D4">.</span><span style="color:#9CDCFE">message</span><span style="color:#D4D4D4"> : </span><span style="color:#CE9178">&#x27;An error occurred&#x27;</span><span style="color:#179FFF">)</span><span style="color:#D4D4D4">;</span></div>
<div class="code" style="left:2466px;top:1966px;"><span style="color:#D4D4D4">      </span><span style="color:#DA70D6">}</span><span style="color:#D4D4D4"> </span><span style="color:#C586C0">finally</span><span style="color:#D4D4D4"> </span><span style="color:#DA70D6">{</span></div>
<div class="code" style="left:2466px;top:2002px;"><span style="color:#D4D4D4">        </span><span style="color:#DCDCAA">setLoading</span><span style="color:#179FFF">(</span><span style="color:#569CD6">false</span><span style="color:#179FFF">)</span><span style="color:#D4D4D4">;</span></div>
<div class="code" style="left:2466px;top:2038px;"><span style="color:#D4D4D4">      </span><span style="color:#DA70D6">}</span></div>
<div class="code" style="left:2466px;top:2074px;"><span style="color:#D4D4D4">    </span><span style="color:#FFD700">}</span><span style="color:#D4D4D4">;</span></div>
<div class="r" style="left:3708px;top:920px;width:28px;height:5px;background:#9a9a9a;"></div>
</div>
<div class="r" style="left:42px;top:2109px;width:3730px;height:1px;background:#2b2b2b;"></div>
<svg class="i" style="left:62px;top:2117px;width:24px;height:28px" viewBox="0 0 24 28"><path d="M3 13 L10 20 L3 27" fill="none" stroke="#cccccc" stroke-width="2"/><path d="M21 1 L14 8 L21 15" fill="none" stroke="#cccccc" stroke-width="2"/></svg>
<svg class="i" style="left:127px;top:2116px;width:22px;height:30px;" viewBox="0 0 22 30" xmlns="http://www.w3.org/2000/svg"><path d="M2 25 V4 Q2 1 5 1 H18 Q21 1 21 4 V21 H5 Q2 21 2 24 Q2 27 5 27 H21" fill="none" stroke="#cccccc" stroke-width="2"/></svg>
<div class="t" style="left:161px;top:2116.9px;font-size:24px;line-height:29px;color:#cccccc;font-weight:400;letter-spacing:0.85px;font-style:normal;">weather-demo</div>
<svg class="i" style="left:340px;top:2115px;width:27px;height:32px;" viewBox="0 0 27 32" xmlns="http://www.w3.org/2000/svg"><circle cx="6" cy="5" r="4" fill="none" stroke="#cccccc" stroke-width="2"/><circle cx="6" cy="27" r="4" fill="none" stroke="#cccccc" stroke-width="2"/><circle cx="21" cy="12" r="4" fill="none" stroke="#cccccc" stroke-width="2"/><path d="M6 9 V23 M21 16 Q21 20 16 20 H11 Q6 20 6 24" fill="none" stroke="#cccccc" stroke-width="2"/></svg>
<div class="t" style="left:378px;top:2116.9px;font-size:24px;line-height:29px;color:#cccccc;font-weight:400;letter-spacing:0.3px;font-style:normal;">main</div>
<svg class="i" style="left:446px;top:2115px;width:26px;height:32px;" viewBox="0 0 26 32" xmlns="http://www.w3.org/2000/svg"><path d="M7 7 Q2 11 2 16 Q2 22 7 25 M19 7 Q24 11 24 16 Q24 22 19 25" fill="none" stroke="#cccccc" stroke-width="2"/><path d="M9 2 L14 5 L9 9 M17 23 L12 27 L17 30" fill="none" stroke="#cccccc" stroke-width="2"/></svg>
<svg class="i" style="left:508px;top:2116px;width:29px;height:29px;" viewBox="0 0 29 29" xmlns="http://www.w3.org/2000/svg"><circle cx="14.5" cy="14.5" r="13" fill="none" stroke="#cccccc" stroke-width="2"/><path d="M9 9 L20 20 M20 9 L9 20" stroke="#cccccc" stroke-width="2"/></svg>
<div class="t" style="left:546px;top:2116.9px;font-size:24px;line-height:29px;color:#cccccc;font-weight:400;letter-spacing:0px;font-style:normal;">0</div>
<svg class="i" style="left:568px;top:2116px;width:29px;height:28px;" viewBox="0 0 29 28" xmlns="http://www.w3.org/2000/svg"><path d="M14.5 2 L27 26 H2 Z" fill="none" stroke="#cccccc" stroke-width="2" stroke-linejoin="round"/><path d="M14.5 10 V18 M14.5 20.5 V23" stroke="#cccccc" stroke-width="2.2"/></svg>
<div class="t" style="left:607px;top:2116.9px;font-size:24px;line-height:29px;color:#cccccc;font-weight:400;letter-spacing:0px;font-style:normal;">0</div>
<div class="t" style="left:3164px;top:2116.1px;font-size:24px;line-height:29px;color:#cccccc;font-weight:400;letter-spacing:0.3px;font-style:normal;">Ln 1, Col 1</div>
<div class="t" style="left:3318px;top:2116.1px;font-size:24px;line-height:29px;color:#cccccc;font-weight:400;letter-spacing:0.3px;font-style:normal;">Spaces: 2</div>
<div class="t" style="left:3466px;top:2116.1px;font-size:24px;line-height:29px;color:#cccccc;font-weight:400;letter-spacing:0px;font-style:normal;">{ }</div>
<div class="t" style="left:3507px;top:2116.1px;font-size:24px;line-height:29px;color:#cccccc;font-weight:400;letter-spacing:0.6px;font-style:normal;">TypeScript</div>
<svg class="i" style="left:3659px;top:2117px;width:34px;height:30px;" viewBox="0 0 34 30" xmlns="http://www.w3.org/2000/svg"><path d="M4 13 Q2 6 7 3 Q12 1 15 5 Q17 7 17 9 Q17 7 19 5 Q22 1 27 3 Q32 6 30 13 Q33 16 33 20 Q33 28 17 29 Q1 28 1 20 Q1 16 4 13 Z" fill="#cccccc"/><ellipse cx="10" cy="9" rx="4.5" ry="4" fill="#181818"/><ellipse cx="24" cy="9" rx="4.5" ry="4" fill="#181818"/><rect x="11.5" y="17" width="3" height="6" rx="1.5" fill="#181818"/><rect x="19.5" y="17" width="3" height="6" rx="1.5" fill="#181818"/></svg>
<svg class="i" style="left:3726px;top:2116px;width:32px;height:30px;" viewBox="0 0 32 30" xmlns="http://www.w3.org/2000/svg"><path d="M3 25 H25 L22 20 V13 Q22 6 14 5 Q6 6 6 13 V20 Z M11 25 Q11 29 14 29 Q17 29 17 25" fill="none" stroke="#cccccc" stroke-width="2" stroke-linejoin="round"/><circle cx="25" cy="7" r="6" fill="#cccccc"/></svg>
<svg class="i" style="left:0;top:0;width:3814px;height:2194px" viewBox="0 0 3814 2194"><path d="M535.7 1049.6 L748.3 901.2 L740.4 894.1 L775.0 888.0 L756.8 918.0 L753.0 908.1 L537.5 1052.2 Z" fill="#ea3143" stroke="#ea3143" stroke-width="1.5" stroke-linejoin="round"/></svg>
</div>
</body></html>
